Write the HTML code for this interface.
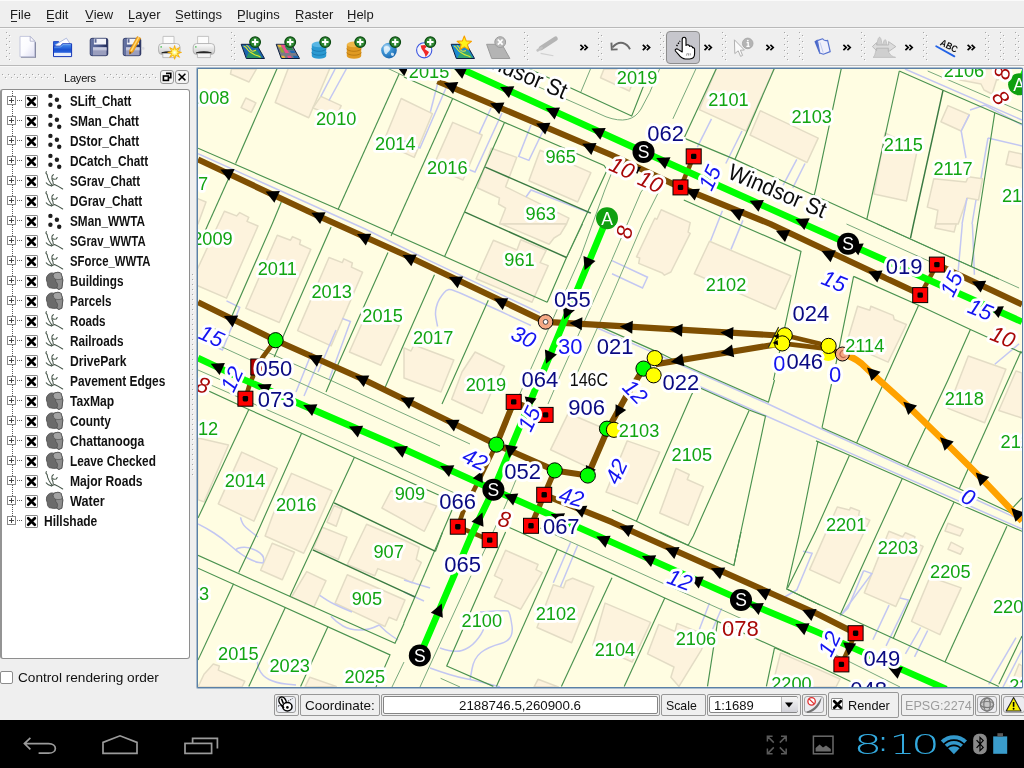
<!DOCTYPE html>
<html><head><meta charset="utf-8"><title>Quantum GIS</title>
<style>
html,body{margin:0;padding:0;}
body{width:1024px;height:768px;overflow:hidden;position:relative;background:#efefef;font-family:"Liberation Sans",sans-serif;font-size:13px;color:#111;}
.abs{position:absolute;}
.hl{position:absolute;left:0;width:1024px;height:1px;}
.menu span{position:absolute;top:7px;font-size:13px;line-height:16px;color:#1a1a1a;white-space:nowrap;transform-origin:0 50%;}
.menu u{text-decoration:none;position:relative;}
.menu u:after{content:"";position:absolute;left:1px;right:1px;bottom:0px;height:1px;background:#2a2a2a;}
.hnd{position:absolute;top:32px;width:6px;height:30px;background-image:linear-gradient(#a6a6a6 1px,transparent 1px),linear-gradient(#fff 1px,transparent 1px),linear-gradient(#a6a6a6 1px,transparent 1px),linear-gradient(#fff 1px,transparent 1px);background-size:1px 6px;background-repeat:repeat-y;background-position:0 0,1px 1px,3px 3px,4px 4px;}
.dpat{position:absolute;top:7px;height:5px;background-image:linear-gradient(90deg,#a6a6a6 1px,transparent 1px),linear-gradient(90deg,#fff 1px,transparent 1px),linear-gradient(90deg,#a6a6a6 1px,transparent 1px),linear-gradient(90deg,#fff 1px,transparent 1px);background-size:6px 1px;background-repeat:repeat-x;background-position:0 0,1px 1px,3px 3px,4px 4px;}
.tree{position:absolute;left:0px;top:89px;width:187px;height:568px;background:#fff;border:1px solid #8e8e8e;border-left:2px solid #949494;border-radius:3px;}
.row{position:absolute;left:0;height:20px;width:187px;}
.row .pm{position:absolute;left:5px;top:5px;width:7px;height:7px;border:1px solid #8a8a8a;background:#fff;}
.row .pm:before{content:"";position:absolute;left:1px;top:3px;width:5px;height:1px;background:#444;}
.row .pm:after{content:"";position:absolute;left:3px;top:1px;width:1px;height:5px;background:#444;}
.row .dots{position:absolute;left:15px;top:9px;width:6px;height:1px;background-image:linear-gradient(90deg,#555 50%,transparent 50%);background-size:2px 1px;}
.row .cb{position:absolute;left:23px;top:4px;width:11px;height:11px;border:1px solid #8c8c8c;background:#fff;border-radius:1px;}
.row .cb svg{left:0;top:0;}
.row .lbl{position:absolute;top:2px;font-weight:bold;font-size:14px;line-height:16px;white-space:nowrap;transform-origin:0 50%;color:#111;}
.row svg{position:absolute;}
</style></head>
<body>
<div id="root" style="position:absolute;left:0;top:0;width:1024px;height:768px;overflow:hidden;will-change:transform">
<div class="hl" style="top:0;background:#fafafa"></div>
<div class="menu">
<span style="left:10px"><u>F</u>ile</span>
<span style="left:46px"><u>E</u>dit</span>
<span style="left:85px"><u>V</u>iew</span>
<span style="left:128px"><u>L</u>ayer</span>
<span style="left:175px"><u>S</u>ettings</span>
<span style="left:237px"><u>P</u>lugins</span>
<span style="left:295px"><u>R</u>aster</span>
<span style="left:347px"><u>H</u>elp</span>
</div>
<div class="hl" style="top:27px;background:#b9b9b9"></div>
<div class="hl" style="top:28px;background:#f8f8f8"></div>

<!-- toolbar -->
<div class="hnd" style="left:6px"></div>
<div class="hnd" style="left:231px"></div>
<div class="hnd" style="left:524px"></div>
<div class="hnd" style="left:598px"></div>
<div class="hnd" style="left:660px"></div>
<div class="hnd" style="left:722px"></div>
<div class="hnd" style="left:784px"></div>
<div class="hnd" style="left:799px"></div>
<div class="hnd" style="left:861px"></div>
<div class="hnd" style="left:923px"></div>
<div class="hnd" style="left:985px"></div>
<div class="hnd" style="left:1000px"></div>
<div class="hnd" style="left:1015px"></div>
<div class="abs" style="left:666px;top:31px;width:32px;height:31px;border:1px solid #8d8d8d;border-radius:4px;background:#c6c6cc"></div>
<svg class="abs" style="left:0;top:28px" width="1024" height="38" viewBox="0 28 1024 38">
<defs>
<linearGradient id="gpage" x1="0" y1="0" x2="1" y2="1"><stop offset="0" stop-color="#ffffff"/><stop offset="0.5" stop-color="#fbfbff"/><stop offset="1" stop-color="#dedef2"/></linearGradient>
<linearGradient id="gfold" x1="0" y1="0" x2="0" y2="1"><stop offset="0" stop-color="#4a94f0"/><stop offset="0.45" stop-color="#1a52d2"/><stop offset="0.68" stop-color="#2a62dc"/><stop offset="0.72" stop-color="#e8eefc"/><stop offset="1" stop-color="#f4f7ff"/></linearGradient>
<linearGradient id="gflop" x1="0" y1="0" x2="1" y2="0"><stop offset="0" stop-color="#6a78a6"/><stop offset="0.5" stop-color="#48558a"/><stop offset="1" stop-color="#1c2656"/></linearGradient>
<radialGradient id="gglobe" cx="0.35" cy="0.3" r="0.8"><stop offset="0" stop-color="#d8ecfa"/><stop offset="0.4" stop-color="#3f97d8"/><stop offset="1" stop-color="#1660a8"/></radialGradient>
<linearGradient id="gprn" x1="0" y1="0" x2="0" y2="1"><stop offset="0" stop-color="#ffffff"/><stop offset="1" stop-color="#c8c8c8"/></linearGradient>
<radialGradient id="gstar" cx="0.5" cy="0.5" r="0.5"><stop offset="0" stop-color="#ffffff"/><stop offset="0.45" stop-color="#fff04a"/><stop offset="1" stop-color="#ffc400"/></radialGradient>
</defs>
<path d="M21 37.4 H30.6 L36 42.4 V57.8 H21 Z" fill="#777b94"/>
<path d="M20 36.4 H30.2 L34.8 41.2 V56.8 H20 Z" fill="url(#gpage)" stroke="#b9bcd8" stroke-width="0.8"/><path d="M30.2 36.4 V41.2 H34.8 Z" fill="#fbfbff" stroke="#a9acc8" stroke-width="0.8"/>
<path d="M53.5 41.6 H58.6 L59.8 43.2 H64 V47 H53.5 Z" fill="#2a66dc" stroke="#1436b8" stroke-width="0.8"/>
<path d="M55.2 44.8 L66.4 38.2 L69.9 43.4 L58.6 49.6 Z" fill="#fcfcff" stroke="#93a4d6" stroke-width="0.7"/>
<path d="M53.5 46.2 H60.2 L62.6 43.8 H71.6 V56.6 H53.5 Z" fill="url(#gfold)" stroke="#1436b8" stroke-width="1"/>
<path d="M54.2 52.8 H70.9 V55.9 H54.2 Z" fill="#e8eefc"/>
<path d="M54.4 47 H60.6 L63 44.6 H70.8" fill="none" stroke="#8cb8f4" stroke-width="0.7"/>
<rect x="90.2" y="38.3" width="17.6" height="17.4" rx="1.8" fill="url(#gflop)" stroke="#222c5c" stroke-width="0.8"/><rect x="93.9" y="38.7" width="12.2" height="5.8" fill="#f2f3fa"/><rect x="94.60000000000001" y="39.1" width="1.9" height="3.6" fill="#5a6694"/><rect x="93.0" y="47.3" width="13.6" height="8" fill="#9a9ebe"/><rect x="93.0" y="47.3" width="13.6" height="2.6" fill="#c8cbe0"/><rect x="93.0" y="49.9" width="13.6" height="0.7" fill="#b2b5d0"/>
<rect x="123.2" y="38.3" width="17.6" height="17.4" rx="1.8" fill="url(#gflop)" stroke="#222c5c" stroke-width="0.8"/><rect x="126.9" y="38.7" width="12.2" height="5.8" fill="#f2f3fa"/><rect x="127.60000000000001" y="39.1" width="1.9" height="3.6" fill="#5a6694"/><rect x="126.0" y="47.3" width="13.6" height="8" fill="#9a9ebe"/><rect x="126.0" y="47.3" width="13.6" height="2.6" fill="#c8cbe0"/><rect x="126.0" y="49.9" width="13.6" height="0.7" fill="#b2b5d0"/>
<path d="M137.2 36.6 L140.8 38.2 L133 52 L129.6 54.2 L129.4 50.4 Z" fill="#f6a81c" stroke="#d88a10" stroke-width="0.6"/><path d="M138.2 37 L139.4 37.6 L131.8 51.2 L130.4 50.8 Z" fill="#ffd978"/><path d="M129.6 54.2 L129.5 51.6 L131.6 52.8 Z" fill="#704010"/>
<circle cx="143.2" cy="48.4" r="1.4" fill="#dcdce2"/>
<path d="M163.0 36.4 H174.0 V44 H163.0 Z" fill="#fcfcfc" stroke="#b8b8b8" stroke-width="0.8"/><rect x="158.6" y="43.6" width="21.4" height="10.8" rx="3.4" fill="url(#gprn)" stroke="#a4a4a4" stroke-width="0.8"/><path d="M161.6 52.2 Q169.2 50.2 176.79999999999998 52.2 V53.6 H161.6 Z" fill="#1a1a1a"/><path d="M162.79999999999998 53.4 H175.79999999999998 V57.6 H162.79999999999998 Z" fill="#f4f4f4" stroke="#b0b0b0" stroke-width="0.8"/><rect x="160.39999999999998" y="46.2" width="1.6" height="1.4" fill="#58c060"/>
<polygon points="174.6,45.5 175.7,49.6 179.5,47.5 177.4,51.3 181.5,52.4 177.4,53.5 179.5,57.3 175.7,55.2 174.6,59.3 173.5,55.2 169.7,57.3 171.8,53.5 167.7,52.4 171.8,51.3 169.7,47.5 173.5,49.6" fill="url(#gstar)" stroke="#f8a800" stroke-width="0.8" stroke-linejoin="round"/>
<path d="M197.60000000000002 36.4 H208.60000000000002 V44 H197.60000000000002 Z" fill="#fcfcfc" stroke="#b8b8b8" stroke-width="0.8"/><rect x="193.20000000000002" y="43.6" width="21.4" height="10.8" rx="3.4" fill="url(#gprn)" stroke="#a4a4a4" stroke-width="0.8"/><path d="M196.20000000000002 52.2 Q203.8 50.2 211.4 52.2 V53.6 H196.20000000000002 Z" fill="#1a1a1a"/><path d="M197.4 53.4 H210.4 V57.6 H197.4 Z" fill="#f4f4f4" stroke="#b0b0b0" stroke-width="0.8"/><rect x="195.0" y="46.2" width="1.6" height="1.4" fill="#58c060"/>
<path d="M241.2 44.3 L256.5 44.3 L264.5 58.5 L246.29999999999998 58.5 Z" fill="#1c66ae" stroke="#0b1e40" stroke-width="1" stroke-linejoin="round"/>
<path d="M248.5 52.5 L257 50.5 L262 57.9 L246.4 57.9 Z" fill="#2e9a58" opacity="0.85"/>
<path d="M243.6 46 C246 46.6 247 48.4 248 50 C249.4 52 251 52.4 253 53.8 C255 55.2 257.4 55.6 260.6 57.2 M246.4 45.2 C248.4 46 249.6 48 251 50.4 C252 51.6 253.6 51.6 256 50" fill="none" stroke="#e2ea28" stroke-width="1.1"/>
<circle cx="255.1" cy="42.1" r="5.3" fill="#2f8a33" stroke="#0c4a12" stroke-width="1.3"/><path d="M251.79999999999998 42.1 H258.4 M255.1 38.800000000000004 V45.4" stroke="#fff" stroke-width="2" fill="none"/>
<path d="M276.2 44.3 L291.5 44.3 L299.5 58.5 L281.3 58.5 Z" fill="#7a7a86" stroke="#0b1e40" stroke-width="1" stroke-linejoin="round"/>
<path d="M277.4 44.8 L280.6 44.8 L282 47.4 L278.8 47.4 Z" fill="#e8b838"/><path d="M280.8 44.8 L284.2 44.8 L289 53 L285.4 53 Z" fill="#ee4f8a"/><path d="M279 47.6 L282 47.6 L284.4 52.4 L281.4 52.4 Z" fill="#8aa838"/><path d="M289.4 50.4 L294 50.4 L295.6 53 L291 53 Z" fill="#1f68b4"/><path d="M284.6 46 L290.6 46 L293.4 50 L287 50 Z" fill="#2f8a58"/><path d="M281 55.8 L284.2 55.8 L285.4 58 L282.2 58 Z" fill="#e8b838"/><path d="M287 55.8 L290.6 55.8 L291.8 58 L288.2 58 Z" fill="#ee4f8a"/><path d="M292.8 55.8 L297.4 55.8 L298.8 58 L294 58 Z" fill="#1f68b4"/>
<circle cx="290.2" cy="42.1" r="5.3" fill="#2f8a33" stroke="#0c4a12" stroke-width="1.3"/><path d="M286.9 42.1 H293.5 M290.2 38.800000000000004 V45.4" stroke="#fff" stroke-width="2" fill="none"/>
<path d="M311.8 44.4 V56 A7.2 2.8 0 0 0 326.2 56 V44.4 Z" fill="#2b9ad2"/><ellipse cx="319.0" cy="44.4" rx="7.2" ry="2.8" fill="#58b6e4"/><path d="M311.8 48.5 A7.2 2.8 0 0 0 326.2 48.5 M311.8 52.4 A7.2 2.8 0 0 0 326.2 52.4" fill="none" stroke="#1a78b0" stroke-width="0.9"/>
<circle cx="325.2" cy="42.1" r="5.3" fill="#2f8a33" stroke="#0c4a12" stroke-width="1.3"/><path d="M321.9 42.1 H328.5 M325.2 38.800000000000004 V45.4" stroke="#fff" stroke-width="2" fill="none"/>
<path d="M346.8 44.4 V56 A7.2 2.8 0 0 0 361.2 56 V44.4 Z" fill="#e09a22"/><ellipse cx="354.0" cy="44.4" rx="7.2" ry="2.8" fill="#efb84a"/><path d="M346.8 48.5 A7.2 2.8 0 0 0 361.2 48.5 M346.8 52.4 A7.2 2.8 0 0 0 361.2 52.4" fill="none" stroke="#b87810" stroke-width="0.9"/>
<circle cx="360.2" cy="42.1" r="5.3" fill="#2f8a33" stroke="#0c4a12" stroke-width="1.3"/><path d="M356.9 42.1 H363.5 M360.2 38.800000000000004 V45.4" stroke="#fff" stroke-width="2" fill="none"/>
<circle cx="389" cy="50.6" r="7.8" fill="url(#gglobe)"/><path d="M384 47 C386 45 389 46 390 48 C391 50 388 52 386.6 54 C385 55 383.4 52 384 47 Z M391 53 C393 52 395 53.4 393.6 55.6 C392 57 390.4 55 391 53 Z" fill="#e4f2fc" opacity="0.85"/>
<circle cx="395.2" cy="42.1" r="5.3" fill="#2f8a33" stroke="#0c4a12" stroke-width="1.3"/><path d="M391.9 42.1 H398.5 M395.2 38.800000000000004 V45.4" stroke="#fff" stroke-width="2" fill="none"/>
<circle cx="424.2" cy="50.3" r="7.6" fill="#f4f4fb" stroke="#3a55e0" stroke-width="1.1"/><path d="M420.6 45.6 L424.8 45 L426.6 46.8 L424.6 49 L426.8 50.4 L429 52 L427.6 54.6 L425.6 57 L424.8 54 L423.4 51.6 L421.6 49 Z" fill="#f02828"/>
<circle cx="430.3" cy="42.1" r="5.3" fill="#2f8a33" stroke="#0c4a12" stroke-width="1.3"/><path d="M427.0 42.1 H433.6 M430.3 38.800000000000004 V45.4" stroke="#fff" stroke-width="2" fill="none"/>
<path d="M451.2 44.3 L466.5 44.3 L474.5 58.5 L456.3 58.5 Z" fill="#1c8ad0" stroke="#0b1e40" stroke-width="1" stroke-linejoin="round"/>
<path d="M460 53 L468 51 L473 57.9 L457.4 57.9 Z" fill="#38a860" opacity="0.85"/>
<path d="M454 46 C456 46.6 457 48.4 458 50 C459.4 52 461 52.4 463 53.8 C465 55.2 467.4 55.6 470.6 57.2 M457 45.4 C458.6 46.4 459.6 48 461 50.4 C462 51.6 463.6 51.6 466 50.4" fill="none" stroke="#d8ea30" stroke-width="1.1"/>
<polygon points="464.3,36.0 466.2,40.9 471.5,41.3 467.4,44.6 468.8,49.7 464.3,46.9 459.8,49.7 461.2,44.6 457.1,41.3 462.4,40.9" fill="#fff21a" stroke="#f8a000" stroke-width="1.1" stroke-linejoin="round"/>
<path d="M486.6 44.3 L501.90000000000003 44.3 L509.90000000000003 58.5 L491.70000000000005 58.5 Z" fill="#b4b4b4" stroke="#9a9a9a" stroke-width="1" stroke-linejoin="round"/>
<circle cx="500.2" cy="42.1" r="5.4" fill="#b9b9b9" stroke="#9a9a9a" stroke-width="1"/><path d="M497.8 39.5 L502.59999999999997 44.7 M502.59999999999997 39.5 L497.8 44.7" stroke="#fff" stroke-width="1.7" fill="none"/>
<path d="M555.6 38.6 L541 48.2" stroke="#b4b4b4" stroke-width="4.4" stroke-linecap="round" fill="none"/><path d="M541.6 47.8 L537.6 50.4" stroke="#c2c2c2" stroke-width="2.6" stroke-linecap="round"/><path d="M540.6 53.4 L553.4 55.8" stroke="#d0d0d0" stroke-width="1.1"/>
<path d="M580.4 44.9 L583.1999999999999 47.5 L580.4 50.1 M584.4 44.9 L587.1999999999999 47.5 L584.4 50.1" fill="none" stroke="#000" stroke-width="1.7"/>
<path d="M630 49.2 C627 43.4 620 39 612.4 47.4" fill="none" stroke="#6a6a6a" stroke-width="1.9"/><path d="M611.4 42.6 L611.8 49.6 L617.6 49.4" fill="none" stroke="#6a6a6a" stroke-width="1.9" stroke-linejoin="miter"/>
<path d="M642.8000000000001 44.9 L645.6 47.5 L642.8000000000001 50.1 M646.8000000000001 44.9 L649.6 47.5 L646.8000000000001 50.1" fill="none" stroke="#000" stroke-width="1.7"/>
<path d="M682.2 52 V39.4 C682.2 36.6 686 36.6 686 39.4 V45.4 C687 44.4 689.4 44.6 689.6 46.4 C690.8 45.6 692.6 46.2 692.6 47.8 C693.6 47.4 694.6 48 694.6 49.6 V53.6 C694.6 57 692.6 59 689.6 59 H685.4 C682.4 59 680.4 57 678.4 54.4 L675.4 51 C674.6 49.6 676.4 48.2 678 49.4 Z" fill="#fff" stroke="#000" stroke-width="1.1" stroke-linejoin="round"/>
<path d="M676.6 46 L680 41" stroke="#000" stroke-width="1.4" stroke-dasharray="1.4 1.2" fill="none"/>
<path d="M686.4 55.6 L687.4 53 M688.4 55.6 L688.8 53.2 M690.2 55.4 L690.4 53.4" stroke="#555" stroke-width="0.6"/>
<path d="M704.5 44.9 L707.3 47.5 L704.5 50.1 M708.5 44.9 L711.3 47.5 L708.5 50.1" fill="none" stroke="#000" stroke-width="1.7"/>
<path d="M734.4 39.8 L734.8 53.6 L738.2 50.8 L740.6 56.4 L742.6 55.4 L740.4 50.2 L744.4 50 Z" fill="#fafafa" stroke="#b0b0b0" stroke-width="1"/>
<circle cx="747.7" cy="43.4" r="5.3" fill="#b4b4b4" stroke="#a2a2a2" stroke-width="0.8"/><path d="M746.6 42.6 H748.2 V46.4 M746.4 46.4 H749.6" stroke="#fff" stroke-width="1.3" fill="none"/><circle cx="747.8" cy="40.6" r="0.9" fill="#fff"/>
<path d="M766.4 44.9 L769.1999999999999 47.5 L766.4 50.1 M770.4 44.9 L773.1999999999999 47.5 L770.4 50.1" fill="none" stroke="#000" stroke-width="1.7"/>
<path d="M814.4 41.6 L817.4 39.6 L822 52.8 L819.4 53.8 Z" fill="#4a68c8"/><path d="M817.4 40.6 L822.6 38.8 C824 41 825.6 41 827.6 40.4 L830.2 51.6 L823.4 54.2 L819.8 53 Z" fill="#f0f0fb" stroke="#5874d0" stroke-width="1.2" stroke-linejoin="round"/><path d="M820 42.4 L823.2 52.6" stroke="#b4c0ea" stroke-width="0.8"/>
<path d="M843.4 44.9 L846.1999999999999 47.5 L843.4 50.1 M847.4 44.9 L850.1999999999999 47.5 L847.4 50.1" fill="none" stroke="#000" stroke-width="1.7"/>
<path d="M873 57.4 C875 57 876 50 877.6 41 C878.6 36 880.6 36 881.4 41 C882 45 882.6 46 883.6 42 C884.6 38.6 886 38.8 886.6 43 C887.6 51 889 56 895.6 57.4 Z" fill="#cfcfcf" stroke="#bcbcbc" stroke-width="0.8"/><path d="M872.4 46.6 L876.6 42.6 V45 H888.6 V41.6 L895.8 46.6 L888.6 51.6 V48.2 H876.6 V50.6 Z" fill="#dcdcdc" stroke="#b0b0b0" stroke-width="0.8" stroke-linejoin="round"/>
<path d="M905.4 44.9 L908.1999999999999 47.5 L905.4 50.1 M909.4 44.9 L912.1999999999999 47.5 L909.4 50.1" fill="none" stroke="#000" stroke-width="1.7"/>
<text transform="translate(939.6,44.8) rotate(27)" font-family="Liberation Sans, sans-serif" font-size="9.5" font-weight="bold" fill="#111" textLength="18" lengthAdjust="spacingAndGlyphs">ABC</text>
<path d="M936.2 46.2 L954.4 56.4" stroke="#2262e6" stroke-width="1.8" stroke-linecap="round"/>
<path d="M967.6 44.9 L970.4 47.5 L967.6 50.1 M971.6 44.9 L974.4 47.5 L971.6 50.1" fill="none" stroke="#000" stroke-width="1.7"/>
</svg>
<div class="hl" style="top:65px;background:#b9b9b9"></div><div class="hl" style="top:66px;background:#f8f8f8"></div>
<!-- dock -->
<div class="abs" style="left:0;top:67px;width:192px;height:22px;">
<div class="dpat" style="left:2px;width:53px"></div><div class="dpat" style="left:104px;width:53px"></div>
<span class="abs" style="left:64px;top:4px;font-size:11px;line-height:14px;color:#111;letter-spacing:-0.2px">Layers</span>
<div class="abs" style="left:160px;top:3px;width:12px;height:12px;border:1px solid #979797;border-radius:3px;background:#f4f4f4"><svg class="abs" style="left:0;top:0" width="12" height="12" viewBox="0 0 12 12"><path d="M5 2.4 H9.8 V6.6 H7.6" fill="none" stroke="#000" stroke-width="1.6"/><rect x="2.4" y="5" width="5" height="4.4" fill="none" stroke="#000" stroke-width="1.6"/></svg></div>
<div class="abs" style="left:175px;top:3px;width:12px;height:12px;border:1px solid #979797;border-radius:3px;background:#f4f4f4"><svg class="abs" style="left:0;top:0" width="12" height="12" viewBox="0 0 12 12"><path d="M2.6 2.8 L9.4 9.4 M9.4 2.8 L2.6 9.4" fill="none" stroke="#000" stroke-width="1.5"/></svg></div>
</div>
<div class="tree">
<div class="abs" style="left:10px;top:1px;width:1px;height:431px;background-image:linear-gradient(180deg,#555 50%,transparent 50%);background-size:1px 2px;"></div>
<div class="row" style="top:1px">
<div class="pm"></div><div class="dots"></div>
<div class="cb"><svg style="left:0;top:0" width="11" height="11" viewBox="0 0 11 11"><path d="M2.2 2.2 L8.8 8.8 M8.8 2.2 L2.2 8.8" stroke="#000" stroke-width="2.7" stroke-linecap="round"/></svg></div>
<svg style="left:43px;top:1px" width="20" height="18" viewBox="0 0 20 18"><g fill="#1e1e1e"><circle cx="5.4" cy="3.9" r="2.2"/><circle cx="11.9" cy="7.8" r="2.2"/><circle cx="5.4" cy="12.8" r="2.2"/><circle cx="14.2" cy="14.8" r="2.2"/></g></svg>
<span class="lbl" style="left:68px;transform:scaleX(0.821)">SLift_Chatt</span>
</div>
<div class="row" style="top:21px">
<div class="pm"></div><div class="dots"></div>
<div class="cb"><svg style="left:0;top:0" width="11" height="11" viewBox="0 0 11 11"><path d="M2.2 2.2 L8.8 8.8 M8.8 2.2 L2.2 8.8" stroke="#000" stroke-width="2.7" stroke-linecap="round"/></svg></div>
<svg style="left:43px;top:1px" width="20" height="18" viewBox="0 0 20 18"><g fill="#1e1e1e"><circle cx="5.4" cy="3.9" r="2.2"/><circle cx="11.9" cy="7.8" r="2.2"/><circle cx="5.4" cy="12.8" r="2.2"/><circle cx="14.2" cy="14.8" r="2.2"/></g></svg>
<span class="lbl" style="left:68px;transform:scaleX(0.854)">SMan_Chatt</span>
</div>
<div class="row" style="top:41px">
<div class="pm"></div><div class="dots"></div>
<div class="cb"><svg style="left:0;top:0" width="11" height="11" viewBox="0 0 11 11"><path d="M2.2 2.2 L8.8 8.8 M8.8 2.2 L2.2 8.8" stroke="#000" stroke-width="2.7" stroke-linecap="round"/></svg></div>
<svg style="left:43px;top:1px" width="20" height="18" viewBox="0 0 20 18"><g fill="#1e1e1e"><circle cx="5.4" cy="3.9" r="2.2"/><circle cx="11.9" cy="7.8" r="2.2"/><circle cx="5.4" cy="12.8" r="2.2"/><circle cx="14.2" cy="14.8" r="2.2"/></g></svg>
<span class="lbl" style="left:68px;transform:scaleX(0.846)">DStor_Chatt</span>
</div>
<div class="row" style="top:61px">
<div class="pm"></div><div class="dots"></div>
<div class="cb"><svg style="left:0;top:0" width="11" height="11" viewBox="0 0 11 11"><path d="M2.2 2.2 L8.8 8.8 M8.8 2.2 L2.2 8.8" stroke="#000" stroke-width="2.7" stroke-linecap="round"/></svg></div>
<svg style="left:43px;top:1px" width="20" height="18" viewBox="0 0 20 18"><g fill="#1e1e1e"><circle cx="5.4" cy="3.9" r="2.2"/><circle cx="11.9" cy="7.8" r="2.2"/><circle cx="5.4" cy="12.8" r="2.2"/><circle cx="14.2" cy="14.8" r="2.2"/></g></svg>
<span class="lbl" style="left:68px;transform:scaleX(0.845)">DCatch_Chatt</span>
</div>
<div class="row" style="top:81px">
<div class="pm"></div><div class="dots"></div>
<div class="cb"><svg style="left:0;top:0" width="11" height="11" viewBox="0 0 11 11"><path d="M2.2 2.2 L8.8 8.8 M8.8 2.2 L2.2 8.8" stroke="#000" stroke-width="2.7" stroke-linecap="round"/></svg></div>
<svg style="left:42px;top:-1px" width="21" height="22" viewBox="0 0 21 22"><g fill="none" stroke="#46564a" stroke-width="1.05" stroke-linecap="round" stroke-linejoin="round"><path d="M2.3 1.6 L1.9 3.2 L3.1 4.6 L3.6 7.2 L5 10.4 L6.5 13 L8.2 15.4 L10.6 14.6 L13.5 15.9 L18.7 19"/><path d="M9.4 4.6 L8 6.2 L7.9 9 L8.9 11.5 L9.3 14"/><path d="M13.2 7.5 L12.3 8.9 L9.9 9.2 L8.6 8.6"/><path d="M2.2 12.9 L4.4 14.8 L7.6 16.1 L8.2 15.4"/></g></svg>
<span class="lbl" style="left:68px;transform:scaleX(0.826)">SGrav_Chatt</span>
</div>
<div class="row" style="top:101px">
<div class="pm"></div><div class="dots"></div>
<div class="cb"><svg style="left:0;top:0" width="11" height="11" viewBox="0 0 11 11"><path d="M2.2 2.2 L8.8 8.8 M8.8 2.2 L2.2 8.8" stroke="#000" stroke-width="2.7" stroke-linecap="round"/></svg></div>
<svg style="left:42px;top:-1px" width="21" height="22" viewBox="0 0 21 22"><g fill="none" stroke="#46564a" stroke-width="1.05" stroke-linecap="round" stroke-linejoin="round"><path d="M2.3 1.6 L1.9 3.2 L3.1 4.6 L3.6 7.2 L5 10.4 L6.5 13 L8.2 15.4 L10.6 14.6 L13.5 15.9 L18.7 19"/><path d="M9.4 4.6 L8 6.2 L7.9 9 L8.9 11.5 L9.3 14"/><path d="M13.2 7.5 L12.3 8.9 L9.9 9.2 L8.6 8.6"/><path d="M2.2 12.9 L4.4 14.8 L7.6 16.1 L8.2 15.4"/></g></svg>
<span class="lbl" style="left:68px;transform:scaleX(0.842)">DGrav_Chatt</span>
</div>
<div class="row" style="top:121px">
<div class="pm"></div><div class="dots"></div>
<div class="cb"><svg style="left:0;top:0" width="11" height="11" viewBox="0 0 11 11"><path d="M2.2 2.2 L8.8 8.8 M8.8 2.2 L2.2 8.8" stroke="#000" stroke-width="2.7" stroke-linecap="round"/></svg></div>
<svg style="left:43px;top:1px" width="20" height="18" viewBox="0 0 20 18"><g fill="#1e1e1e"><circle cx="5.4" cy="3.9" r="2.2"/><circle cx="11.9" cy="7.8" r="2.2"/><circle cx="5.4" cy="12.8" r="2.2"/><circle cx="14.2" cy="14.8" r="2.2"/></g></svg>
<span class="lbl" style="left:68px;transform:scaleX(0.841)">SMan_WWTA</span>
</div>
<div class="row" style="top:141px">
<div class="pm"></div><div class="dots"></div>
<div class="cb"><svg style="left:0;top:0" width="11" height="11" viewBox="0 0 11 11"><path d="M2.2 2.2 L8.8 8.8 M8.8 2.2 L2.2 8.8" stroke="#000" stroke-width="2.7" stroke-linecap="round"/></svg></div>
<svg style="left:42px;top:-1px" width="21" height="22" viewBox="0 0 21 22"><g fill="none" stroke="#46564a" stroke-width="1.05" stroke-linecap="round" stroke-linejoin="round"><path d="M2.3 1.6 L1.9 3.2 L3.1 4.6 L3.6 7.2 L5 10.4 L6.5 13 L8.2 15.4 L10.6 14.6 L13.5 15.9 L18.7 19"/><path d="M9.4 4.6 L8 6.2 L7.9 9 L8.9 11.5 L9.3 14"/><path d="M13.2 7.5 L12.3 8.9 L9.9 9.2 L8.6 8.6"/><path d="M2.2 12.9 L4.4 14.8 L7.6 16.1 L8.2 15.4"/></g></svg>
<span class="lbl" style="left:68px;transform:scaleX(0.812)">SGrav_WWTA</span>
</div>
<div class="row" style="top:161px">
<div class="pm"></div><div class="dots"></div>
<div class="cb"><svg style="left:0;top:0" width="11" height="11" viewBox="0 0 11 11"><path d="M2.2 2.2 L8.8 8.8 M8.8 2.2 L2.2 8.8" stroke="#000" stroke-width="2.7" stroke-linecap="round"/></svg></div>
<svg style="left:42px;top:-1px" width="21" height="22" viewBox="0 0 21 22"><g fill="none" stroke="#46564a" stroke-width="1.05" stroke-linecap="round" stroke-linejoin="round"><path d="M2.3 1.6 L1.9 3.2 L3.1 4.6 L3.6 7.2 L5 10.4 L6.5 13 L8.2 15.4 L10.6 14.6 L13.5 15.9 L18.7 19"/><path d="M9.4 4.6 L8 6.2 L7.9 9 L8.9 11.5 L9.3 14"/><path d="M13.2 7.5 L12.3 8.9 L9.9 9.2 L8.6 8.6"/><path d="M2.2 12.9 L4.4 14.8 L7.6 16.1 L8.2 15.4"/></g></svg>
<span class="lbl" style="left:68px;transform:scaleX(0.811)">SForce_WWTA</span>
</div>
<div class="row" style="top:181px">
<div class="pm"></div><div class="dots"></div>
<div class="cb"><svg style="left:0;top:0" width="11" height="11" viewBox="0 0 11 11"><path d="M2.2 2.2 L8.8 8.8 M8.8 2.2 L2.2 8.8" stroke="#000" stroke-width="2.7" stroke-linecap="round"/></svg></div>
<svg style="left:43px;top:0px" width="20" height="20" viewBox="0 0 20 20"><path d="M3.2 3.6 C5 1.6 7.5 1.6 9 2.4 L10.5 1.8 C13 1 15.5 1.4 16 2.6 L17.2 6.5 L17.8 9 L17.4 13 L16.8 17.2 L13.8 18.4 L11.8 17.2 L8.5 17.4 L4 16.6 L2.6 14.6 L2.2 11.5 L1.4 9 L1.6 6 Z" fill="#6b6b6b" stroke="#4c4c4c" stroke-width="0.8"/><path d="M10.5 1.8 C13 1 15.5 1.4 16 2.6 L17.2 6.5 L17.8 9 L17.4 13 L16.8 17.2 L13.8 18.4 L11.8 17.2 L12.6 14.6 L12.2 12.4 L10.8 10.4 L10.6 8.2 L8.6 6.4 L8.2 4.2 L9 2.4 Z" fill="#8d8d8d" stroke="#4c4c4c" stroke-width="0.7"/><path d="M10.5 1.8 C13 1 15.5 1.4 16 2.6 L17.2 6.5 L16.6 8.2 L13 8.6 L10.6 8.2 L8.6 6.4 L8.2 4.2 L9 2.4 Z" fill="#a3a3a3" stroke="#4c4c4c" stroke-width="0.6"/></svg>
<span class="lbl" style="left:68px;transform:scaleX(0.839)">Buildings</span>
</div>
<div class="row" style="top:201px">
<div class="pm"></div><div class="dots"></div>
<div class="cb"><svg style="left:0;top:0" width="11" height="11" viewBox="0 0 11 11"><path d="M2.2 2.2 L8.8 8.8 M8.8 2.2 L2.2 8.8" stroke="#000" stroke-width="2.7" stroke-linecap="round"/></svg></div>
<svg style="left:43px;top:0px" width="20" height="20" viewBox="0 0 20 20"><path d="M3.2 3.6 C5 1.6 7.5 1.6 9 2.4 L10.5 1.8 C13 1 15.5 1.4 16 2.6 L17.2 6.5 L17.8 9 L17.4 13 L16.8 17.2 L13.8 18.4 L11.8 17.2 L8.5 17.4 L4 16.6 L2.6 14.6 L2.2 11.5 L1.4 9 L1.6 6 Z" fill="#6b6b6b" stroke="#4c4c4c" stroke-width="0.8"/><path d="M10.5 1.8 C13 1 15.5 1.4 16 2.6 L17.2 6.5 L17.8 9 L17.4 13 L16.8 17.2 L13.8 18.4 L11.8 17.2 L12.6 14.6 L12.2 12.4 L10.8 10.4 L10.6 8.2 L8.6 6.4 L8.2 4.2 L9 2.4 Z" fill="#8d8d8d" stroke="#4c4c4c" stroke-width="0.7"/><path d="M10.5 1.8 C13 1 15.5 1.4 16 2.6 L17.2 6.5 L16.6 8.2 L13 8.6 L10.6 8.2 L8.6 6.4 L8.2 4.2 L9 2.4 Z" fill="#a3a3a3" stroke="#4c4c4c" stroke-width="0.6"/></svg>
<span class="lbl" style="left:68px;transform:scaleX(0.832)">Parcels</span>
</div>
<div class="row" style="top:221px">
<div class="pm"></div><div class="dots"></div>
<div class="cb"><svg style="left:0;top:0" width="11" height="11" viewBox="0 0 11 11"><path d="M2.2 2.2 L8.8 8.8 M8.8 2.2 L2.2 8.8" stroke="#000" stroke-width="2.7" stroke-linecap="round"/></svg></div>
<svg style="left:42px;top:-1px" width="21" height="22" viewBox="0 0 21 22"><g fill="none" stroke="#46564a" stroke-width="1.05" stroke-linecap="round" stroke-linejoin="round"><path d="M2.3 1.6 L1.9 3.2 L3.1 4.6 L3.6 7.2 L5 10.4 L6.5 13 L8.2 15.4 L10.6 14.6 L13.5 15.9 L18.7 19"/><path d="M9.4 4.6 L8 6.2 L7.9 9 L8.9 11.5 L9.3 14"/><path d="M13.2 7.5 L12.3 8.9 L9.9 9.2 L8.6 8.6"/><path d="M2.2 12.9 L4.4 14.8 L7.6 16.1 L8.2 15.4"/></g></svg>
<span class="lbl" style="left:68px;transform:scaleX(0.830)">Roads</span>
</div>
<div class="row" style="top:241px">
<div class="pm"></div><div class="dots"></div>
<div class="cb"><svg style="left:0;top:0" width="11" height="11" viewBox="0 0 11 11"><path d="M2.2 2.2 L8.8 8.8 M8.8 2.2 L2.2 8.8" stroke="#000" stroke-width="2.7" stroke-linecap="round"/></svg></div>
<svg style="left:42px;top:-1px" width="21" height="22" viewBox="0 0 21 22"><g fill="none" stroke="#46564a" stroke-width="1.05" stroke-linecap="round" stroke-linejoin="round"><path d="M2.3 1.6 L1.9 3.2 L3.1 4.6 L3.6 7.2 L5 10.4 L6.5 13 L8.2 15.4 L10.6 14.6 L13.5 15.9 L18.7 19"/><path d="M9.4 4.6 L8 6.2 L7.9 9 L8.9 11.5 L9.3 14"/><path d="M13.2 7.5 L12.3 8.9 L9.9 9.2 L8.6 8.6"/><path d="M2.2 12.9 L4.4 14.8 L7.6 16.1 L8.2 15.4"/></g></svg>
<span class="lbl" style="left:68px;transform:scaleX(0.839)">Railroads</span>
</div>
<div class="row" style="top:261px">
<div class="pm"></div><div class="dots"></div>
<div class="cb"><svg style="left:0;top:0" width="11" height="11" viewBox="0 0 11 11"><path d="M2.2 2.2 L8.8 8.8 M8.8 2.2 L2.2 8.8" stroke="#000" stroke-width="2.7" stroke-linecap="round"/></svg></div>
<svg style="left:42px;top:-1px" width="21" height="22" viewBox="0 0 21 22"><g fill="none" stroke="#46564a" stroke-width="1.05" stroke-linecap="round" stroke-linejoin="round"><path d="M2.3 1.6 L1.9 3.2 L3.1 4.6 L3.6 7.2 L5 10.4 L6.5 13 L8.2 15.4 L10.6 14.6 L13.5 15.9 L18.7 19"/><path d="M9.4 4.6 L8 6.2 L7.9 9 L8.9 11.5 L9.3 14"/><path d="M13.2 7.5 L12.3 8.9 L9.9 9.2 L8.6 8.6"/><path d="M2.2 12.9 L4.4 14.8 L7.6 16.1 L8.2 15.4"/></g></svg>
<span class="lbl" style="left:68px;transform:scaleX(0.864)">DrivePark</span>
</div>
<div class="row" style="top:281px">
<div class="pm"></div><div class="dots"></div>
<div class="cb"><svg style="left:0;top:0" width="11" height="11" viewBox="0 0 11 11"><path d="M2.2 2.2 L8.8 8.8 M8.8 2.2 L2.2 8.8" stroke="#000" stroke-width="2.7" stroke-linecap="round"/></svg></div>
<svg style="left:42px;top:-1px" width="21" height="22" viewBox="0 0 21 22"><g fill="none" stroke="#46564a" stroke-width="1.05" stroke-linecap="round" stroke-linejoin="round"><path d="M2.3 1.6 L1.9 3.2 L3.1 4.6 L3.6 7.2 L5 10.4 L6.5 13 L8.2 15.4 L10.6 14.6 L13.5 15.9 L18.7 19"/><path d="M9.4 4.6 L8 6.2 L7.9 9 L8.9 11.5 L9.3 14"/><path d="M13.2 7.5 L12.3 8.9 L9.9 9.2 L8.6 8.6"/><path d="M2.2 12.9 L4.4 14.8 L7.6 16.1 L8.2 15.4"/></g></svg>
<span class="lbl" style="left:68px;transform:scaleX(0.851)">Pavement Edges</span>
</div>
<div class="row" style="top:301px">
<div class="pm"></div><div class="dots"></div>
<div class="cb"><svg style="left:0;top:0" width="11" height="11" viewBox="0 0 11 11"><path d="M2.2 2.2 L8.8 8.8 M8.8 2.2 L2.2 8.8" stroke="#000" stroke-width="2.7" stroke-linecap="round"/></svg></div>
<svg style="left:43px;top:0px" width="20" height="20" viewBox="0 0 20 20"><path d="M3.2 3.6 C5 1.6 7.5 1.6 9 2.4 L10.5 1.8 C13 1 15.5 1.4 16 2.6 L17.2 6.5 L17.8 9 L17.4 13 L16.8 17.2 L13.8 18.4 L11.8 17.2 L8.5 17.4 L4 16.6 L2.6 14.6 L2.2 11.5 L1.4 9 L1.6 6 Z" fill="#6b6b6b" stroke="#4c4c4c" stroke-width="0.8"/><path d="M10.5 1.8 C13 1 15.5 1.4 16 2.6 L17.2 6.5 L17.8 9 L17.4 13 L16.8 17.2 L13.8 18.4 L11.8 17.2 L12.6 14.6 L12.2 12.4 L10.8 10.4 L10.6 8.2 L8.6 6.4 L8.2 4.2 L9 2.4 Z" fill="#8d8d8d" stroke="#4c4c4c" stroke-width="0.7"/><path d="M10.5 1.8 C13 1 15.5 1.4 16 2.6 L17.2 6.5 L16.6 8.2 L13 8.6 L10.6 8.2 L8.6 6.4 L8.2 4.2 L9 2.4 Z" fill="#a3a3a3" stroke="#4c4c4c" stroke-width="0.6"/></svg>
<span class="lbl" style="left:68px;transform:scaleX(0.864)">TaxMap</span>
</div>
<div class="row" style="top:321px">
<div class="pm"></div><div class="dots"></div>
<div class="cb"><svg style="left:0;top:0" width="11" height="11" viewBox="0 0 11 11"><path d="M2.2 2.2 L8.8 8.8 M8.8 2.2 L2.2 8.8" stroke="#000" stroke-width="2.7" stroke-linecap="round"/></svg></div>
<svg style="left:43px;top:0px" width="20" height="20" viewBox="0 0 20 20"><path d="M3.2 3.6 C5 1.6 7.5 1.6 9 2.4 L10.5 1.8 C13 1 15.5 1.4 16 2.6 L17.2 6.5 L17.8 9 L17.4 13 L16.8 17.2 L13.8 18.4 L11.8 17.2 L8.5 17.4 L4 16.6 L2.6 14.6 L2.2 11.5 L1.4 9 L1.6 6 Z" fill="#6b6b6b" stroke="#4c4c4c" stroke-width="0.8"/><path d="M10.5 1.8 C13 1 15.5 1.4 16 2.6 L17.2 6.5 L17.8 9 L17.4 13 L16.8 17.2 L13.8 18.4 L11.8 17.2 L12.6 14.6 L12.2 12.4 L10.8 10.4 L10.6 8.2 L8.6 6.4 L8.2 4.2 L9 2.4 Z" fill="#8d8d8d" stroke="#4c4c4c" stroke-width="0.7"/><path d="M10.5 1.8 C13 1 15.5 1.4 16 2.6 L17.2 6.5 L16.6 8.2 L13 8.6 L10.6 8.2 L8.6 6.4 L8.2 4.2 L9 2.4 Z" fill="#a3a3a3" stroke="#4c4c4c" stroke-width="0.6"/></svg>
<span class="lbl" style="left:68px;transform:scaleX(0.848)">County</span>
</div>
<div class="row" style="top:341px">
<div class="pm"></div><div class="dots"></div>
<div class="cb"><svg style="left:0;top:0" width="11" height="11" viewBox="0 0 11 11"><path d="M2.2 2.2 L8.8 8.8 M8.8 2.2 L2.2 8.8" stroke="#000" stroke-width="2.7" stroke-linecap="round"/></svg></div>
<svg style="left:43px;top:0px" width="20" height="20" viewBox="0 0 20 20"><path d="M3.2 3.6 C5 1.6 7.5 1.6 9 2.4 L10.5 1.8 C13 1 15.5 1.4 16 2.6 L17.2 6.5 L17.8 9 L17.4 13 L16.8 17.2 L13.8 18.4 L11.8 17.2 L8.5 17.4 L4 16.6 L2.6 14.6 L2.2 11.5 L1.4 9 L1.6 6 Z" fill="#6b6b6b" stroke="#4c4c4c" stroke-width="0.8"/><path d="M10.5 1.8 C13 1 15.5 1.4 16 2.6 L17.2 6.5 L17.8 9 L17.4 13 L16.8 17.2 L13.8 18.4 L11.8 17.2 L12.6 14.6 L12.2 12.4 L10.8 10.4 L10.6 8.2 L8.6 6.4 L8.2 4.2 L9 2.4 Z" fill="#8d8d8d" stroke="#4c4c4c" stroke-width="0.7"/><path d="M10.5 1.8 C13 1 15.5 1.4 16 2.6 L17.2 6.5 L16.6 8.2 L13 8.6 L10.6 8.2 L8.6 6.4 L8.2 4.2 L9 2.4 Z" fill="#a3a3a3" stroke="#4c4c4c" stroke-width="0.6"/></svg>
<span class="lbl" style="left:68px;transform:scaleX(0.868)">Chattanooga</span>
</div>
<div class="row" style="top:361px">
<div class="pm"></div><div class="dots"></div>
<div class="cb"><svg style="left:0;top:0" width="11" height="11" viewBox="0 0 11 11"><path d="M2.2 2.2 L8.8 8.8 M8.8 2.2 L2.2 8.8" stroke="#000" stroke-width="2.7" stroke-linecap="round"/></svg></div>
<svg style="left:43px;top:0px" width="20" height="20" viewBox="0 0 20 20"><path d="M3.2 3.6 C5 1.6 7.5 1.6 9 2.4 L10.5 1.8 C13 1 15.5 1.4 16 2.6 L17.2 6.5 L17.8 9 L17.4 13 L16.8 17.2 L13.8 18.4 L11.8 17.2 L8.5 17.4 L4 16.6 L2.6 14.6 L2.2 11.5 L1.4 9 L1.6 6 Z" fill="#6b6b6b" stroke="#4c4c4c" stroke-width="0.8"/><path d="M10.5 1.8 C13 1 15.5 1.4 16 2.6 L17.2 6.5 L17.8 9 L17.4 13 L16.8 17.2 L13.8 18.4 L11.8 17.2 L12.6 14.6 L12.2 12.4 L10.8 10.4 L10.6 8.2 L8.6 6.4 L8.2 4.2 L9 2.4 Z" fill="#8d8d8d" stroke="#4c4c4c" stroke-width="0.7"/><path d="M10.5 1.8 C13 1 15.5 1.4 16 2.6 L17.2 6.5 L16.6 8.2 L13 8.6 L10.6 8.2 L8.6 6.4 L8.2 4.2 L9 2.4 Z" fill="#a3a3a3" stroke="#4c4c4c" stroke-width="0.6"/></svg>
<span class="lbl" style="left:68px;transform:scaleX(0.842)">Leave Checked</span>
</div>
<div class="row" style="top:381px">
<div class="pm"></div><div class="dots"></div>
<div class="cb"><svg style="left:0;top:0" width="11" height="11" viewBox="0 0 11 11"><path d="M2.2 2.2 L8.8 8.8 M8.8 2.2 L2.2 8.8" stroke="#000" stroke-width="2.7" stroke-linecap="round"/></svg></div>
<svg style="left:42px;top:-1px" width="21" height="22" viewBox="0 0 21 22"><g fill="none" stroke="#46564a" stroke-width="1.05" stroke-linecap="round" stroke-linejoin="round"><path d="M2.3 1.6 L1.9 3.2 L3.1 4.6 L3.6 7.2 L5 10.4 L6.5 13 L8.2 15.4 L10.6 14.6 L13.5 15.9 L18.7 19"/><path d="M9.4 4.6 L8 6.2 L7.9 9 L8.9 11.5 L9.3 14"/><path d="M13.2 7.5 L12.3 8.9 L9.9 9.2 L8.6 8.6"/><path d="M2.2 12.9 L4.4 14.8 L7.6 16.1 L8.2 15.4"/></g></svg>
<span class="lbl" style="left:68px;transform:scaleX(0.863)">Major Roads</span>
</div>
<div class="row" style="top:401px">
<div class="pm"></div><div class="dots"></div>
<div class="cb"><svg style="left:0;top:0" width="11" height="11" viewBox="0 0 11 11"><path d="M2.2 2.2 L8.8 8.8 M8.8 2.2 L2.2 8.8" stroke="#000" stroke-width="2.7" stroke-linecap="round"/></svg></div>
<svg style="left:43px;top:0px" width="20" height="20" viewBox="0 0 20 20"><path d="M3.2 3.6 C5 1.6 7.5 1.6 9 2.4 L10.5 1.8 C13 1 15.5 1.4 16 2.6 L17.2 6.5 L17.8 9 L17.4 13 L16.8 17.2 L13.8 18.4 L11.8 17.2 L8.5 17.4 L4 16.6 L2.6 14.6 L2.2 11.5 L1.4 9 L1.6 6 Z" fill="#6b6b6b" stroke="#4c4c4c" stroke-width="0.8"/><path d="M10.5 1.8 C13 1 15.5 1.4 16 2.6 L17.2 6.5 L17.8 9 L17.4 13 L16.8 17.2 L13.8 18.4 L11.8 17.2 L12.6 14.6 L12.2 12.4 L10.8 10.4 L10.6 8.2 L8.6 6.4 L8.2 4.2 L9 2.4 Z" fill="#8d8d8d" stroke="#4c4c4c" stroke-width="0.7"/><path d="M10.5 1.8 C13 1 15.5 1.4 16 2.6 L17.2 6.5 L16.6 8.2 L13 8.6 L10.6 8.2 L8.6 6.4 L8.2 4.2 L9 2.4 Z" fill="#a3a3a3" stroke="#4c4c4c" stroke-width="0.6"/></svg>
<span class="lbl" style="left:68px;transform:scaleX(0.905)">Water</span>
</div>
<div class="row" style="top:421px">
<div class="pm"></div><div class="dots"></div>
<div class="cb"><svg style="left:0;top:0" width="11" height="11" viewBox="0 0 11 11"><path d="M2.2 2.2 L8.8 8.8 M8.8 2.2 L2.2 8.8" stroke="#000" stroke-width="2.7" stroke-linecap="round"/></svg></div>
<span class="lbl" style="left:42px;transform:scaleX(0.856)">Hillshade</span>
</div>
</div>
<div class="abs" style="left:0px;top:671px;width:11px;height:11px;border:1px solid #8c8c8c;background:#fff;border-radius:2px"></div>
<span class="abs" style="left:18px;top:670px;font-size:13.3px;line-height:16px;white-space:nowrap;color:#111;transform-origin:0 50%;transform:scaleX(1.025)" id="cro">Control rendering order</span>
<div class="abs" style="left:192px;top:274px;width:2px;height:203px;background-image:linear-gradient(#a6a6a6 1px,transparent 1px),linear-gradient(#fff 1px,transparent 1px);background-size:1px 5px;background-repeat:repeat-y;background-position:0 0,1px 1px"></div>
<!-- map -->
<div class="abs" style="left:196px;top:67px;width:827px;height:622px;background:#a9bccd;border-radius:2px"></div>
<div class="abs" style="left:197px;top:68px;width:826px;height:620px;background:#5b80a6;border-radius:1px"></div>
<div class="abs" style="left:198px;top:69px;width:824px;height:618px;background:#fffde2;overflow:hidden">
<svg class="abs" style="left:0;top:0" width="824" height="618" viewBox="198 69 824 618" font-family="Liberation Sans, sans-serif">
<style>
.b{fill:#fdf3dd;stroke:#e3dcc5;stroke-width:1.5;stroke-linejoin:round}
.p{fill:none;stroke:#4a924f;stroke-width:1.15}
.q{fill:none;stroke:#79a97c;stroke-width:1}
.d{fill:none;stroke:#3a7a42;stroke-width:1.45}
.v{fill:none;stroke:#c3c7f2;stroke-width:1.5}
.br{fill:none;stroke:#7f4f02;stroke-width:6.1;stroke-linejoin:round}
.bs{fill:none;stroke:#7f4f02;stroke-width:4.6;stroke-linejoin:round}
.bm{fill:none;stroke:#7f4f02;stroke-width:5.6;stroke-linejoin:round}
.gr{fill:none;stroke:#00ff00;stroke-width:6.7;stroke-linejoin:round}
.or{fill:none;stroke:#ffa200;stroke-width:6.6;stroke-linejoin:round}
text{paint-order:stroke fill;stroke-linejoin:round}
.lg{fill:#12a512;font-size:18.2px;stroke:#fff;stroke-width:5.6px}
.ln{fill:#0a0a82;font-size:22px;stroke:#fff;stroke-width:5.8px}
.lb{fill:#1414f0;font-size:22px;font-style:italic;stroke:#fff;stroke-width:5.8px}
.lu{fill:#1414f0;font-size:22px;stroke:#fff;stroke-width:5.8px}
.lr{fill:#a80808;font-size:22px;font-style:italic;stroke:#fff;stroke-width:5.8px}
.lk{fill:#0c0c0c;stroke:#fff;stroke-width:5.8px}
</style>
<rect x="198" y="69" width="824" height="618" fill="#fffde2"/>
<polygon class="b" points="231.5,69.0 256.5,69.0 249.0,82.0 230.5,74.0"/>
<polygon class="b" points="245.8,98.0 255.9,102.9 251.2,112.3 241.1,107.6"/>
<polygon class="b" points="288.4,68.0 330.0,68.0 308.7,117.8 275.2,102.5"/>
<polygon class="b" points="320.9,96.4 341.2,105.6 336.2,116.7 312.8,108.0"/>
<polygon class="b" points="196.0,198.0 206.0,202.0 198.0,224.0 196.0,224.0"/>
<polygon class="b" points="401.2,98.5 432.4,113.7 414.2,157.4 383.0,143.0"/>
<polygon class="b" points="452.7,122.4 482.2,135.0 463.0,180.0 433.0,167.0"/>
<polygon class="b" points="540.1,150.3 590.9,172.6 577.7,202.0 528.9,180.7"/>
<polygon class="b" points="491.3,148.2 516.7,157.4 505.6,186.8 568.9,218.1 566.5,224.0 499.5,224.0 505.6,208.2 498.5,204.0 499.5,198.0 477.1,187.8"/>
<polygon class="b" points="604.0,69.0 638.0,69.0 629.4,91.0 600.5,77.7"/>
<polygon class="b" points="990.0,69.0 1003.0,69.0 998.0,80.0 985.0,75.0"/>
<polygon class="b" points="716.6,68.0 774.5,68.0 746.1,131.0 699.3,109.6"/>
<polygon class="b" points="760.3,110.7 818.2,138.1 807.0,162.5 750.1,135.0"/>
<polygon class="b" points="885.0,133.0 917.5,149.0 906.4,201.0 873.9,194.0"/>
<polygon class="b" points="948.0,105.6 969.4,114.7 961.2,131.0 940.9,121.8"/>
<polygon class="b" points="933.8,178.7 966.0,182.0 968.3,176.7 982.6,178.7 978.5,200.0 967.3,198.0 958.2,224.0 935.8,224.0 937.9,210.2 927.3,207.1"/>
<polygon class="b" points="1009.0,151.3 1022.0,154.0 1022.0,168.0 1006.0,164.5"/>
<polygon class="b" points="966.0,69.0 1000.0,69.0 992.0,94.0 984.0,90.0 981.0,84.0 960.0,80.0"/>
<polygon class="b" points="224.4,211.2 236.6,215.9 239.7,212.6 248.8,217.3 247.0,221.4 258.0,226.0 226.5,298.1 196.0,285.0 196.0,272.0"/>
<polygon class="b" points="277.3,235.2 290.5,240.2 292.5,236.6 300.6,240.2 299.6,244.3 310.8,249.4 279.3,322.5 245.8,308.3"/>
<polygon class="b" points="329.0,257.5 342.3,262.6 343.9,258.9 352.4,263.0 351.4,267.1 362.6,272.3 331.1,345.9 297.6,330.6"/>
<polygon class="b" points="368.0,310.0 399.1,325.6 380.8,365.2 349.4,352.0"/>
<polygon class="b" points="493.4,240.2 517.0,250.0 520.8,239.8 546.2,250.4 540.1,262.6 548.2,265.6 532.0,302.2 476.1,278.8"/>
<polygon class="b" points="501.5,224.0 566.5,224.0 560.4,234.2 554.0,238.0 549.2,244.3"/>
<polygon class="b" points="404.0,347.9 411.0,351.0 414.0,345.0 453.8,360.0 441.0,392.0 404.0,378.0"/>
<polygon class="b" points="475.1,352.0 504.5,366.2 491.3,392.2 482.2,413.5 451.7,399.3 462.0,372.0"/>
<polygon class="b" points="661.2,209.7 690.2,222.6 688.1,232.2 690.2,233.3 670.9,272.0 664.4,275.2 662.3,273.0 638.7,263.4 639.7,258.0 636.5,256.9 654.8,218.3 656.9,219.3"/>
<polygon class="b" points="709.5,241.3 790.8,275.8 775.5,309.3 694.3,273.8"/>
<polygon class="b" points="857.6,306.3 869.8,310.3 870.8,306.3 893.2,315.4 894.2,319.5 906.4,324.5 888.1,362.1 846.5,343.8"/>
<polygon class="b" points="968.3,356.0 1005.9,369.2 984.6,422.7 948.0,408.4"/>
<polygon class="b" points="1016.0,371.0 1022.0,373.0 1022.0,418.0 998.8,410.5"/>
<polygon class="b" points="935.8,224.0 956.2,224.0 954.1,232.1 934.8,228.0"/>
<polygon class="b" points="198.0,437.9 228.5,445.0 204.1,501.9 198.0,499.8"/>
<polygon class="b" points="241.7,452.1 277.3,468.4 253.9,521.2 218.3,503.9"/>
<polygon class="b" points="291.5,473.4 332.1,490.7 313.8,532.0 303.7,553.3 265.1,536.0 273.2,514.0"/>
<polygon class="b" points="334.1,505.5 342.3,509.0 336.2,526.3 327.0,522.2"/>
<polygon class="b" points="391.0,490.7 436.5,505.9 424.3,531.3 381.9,508.0"/>
<polygon class="b" points="366.6,524.2 404.0,540.0 419.2,547.2 416.2,559.4 421.3,562.5 412.0,582.8 404.0,578.7 377.8,568.6 374.8,575.7 347.3,564.5"/>
<polygon class="b" points="568.3,413.2 607.0,429.8 588.2,467.4 550.6,449.7"/>
<polygon class="b" points="627.2,440.9 659.7,452.1 637.4,503.9 606.0,492.0"/>
<polygon class="b" points="676.0,468.4 689.2,474.5 687.2,479.5 703.4,486.6 700.4,493.7 688.2,525.2 659.7,513.0"/>
<polygon class="b" points="272.2,543.2 294.5,552.3 282.3,579.7 260.6,570.2"/>
<polygon class="b" points="322.2,527.2 347.0,537.1 338.3,559.4 313.5,548.3"/>
<polygon class="b" points="306.7,571.6 326.0,580.7 313.8,607.2 291.5,597.0"/>
<polygon class="b" points="347.3,574.7 405.0,600.0 396.5,620.4 389.0,617.3 384.9,626.5 335.1,603.1"/>
<polygon class="b" points="204.0,674.2 213.3,664.0 219.4,666.0 218.3,670.1 244.8,681.3 242.0,687.0 198.0,687.0"/>
<polygon class="b" points="309.8,677.2 336.2,686.4 305.0,687.0"/>
<polygon class="b" points="505.6,550.3 538.1,564.5 536.0,569.6 542.1,572.6 520.8,609.2 494.4,597.0 502.5,579.7 494.4,575.7"/>
<polygon class="b" points="572.6,578.3 593.9,586.8 571.6,642.7 537.0,627.5 553.3,584.8 563.5,587.9 566.0,581.0"/>
<polygon class="b" points="605.1,603.1 650.6,622.4 632.3,662.0 592.9,645.0"/>
<polygon class="b" points="538.0,679.3 558.4,687.0 534.0,687.0"/>
<polygon class="b" points="658.7,624.4 675.0,631.5 677.0,623.4 707.5,635.6 701.4,649.8 679.0,686.4 670.9,677.2 674.0,667.0 647.5,653.9"/>
<polygon class="b" points="780.6,652.9 820.0,670.1 840.0,679.0 836.0,687.0 772.0,687.0"/>
<polygon class="b" points="837.3,507.0 849.5,510.0 850.5,507.5 859.7,511.0 858.6,515.0 869.8,520.2 839.7,583.3 809.6,569.6"/>
<polygon class="b" points="888.9,531.3 902.6,536.8 905.3,532.7 914.9,536.8 913.5,542.3 923.1,546.4 895.8,606.5 864.3,592.9"/>
<polygon class="b" points="930.0,577.0 961.2,587.9 939.9,634.6 911.5,621.4"/>
<polygon class="b" points="951.1,542.2 963.3,548.3 960.3,554.3 948.0,549.3"/>
<polygon class="b" points="948.0,523.2 963.3,529.3 960.0,536.0 945.0,531.0"/>
<polygon class="b" points="1019.0,664.0 1022.0,666.0 1022.0,687.0 1010.0,687.0"/>
<polyline class="v" points="198.0,153.6 364.6,228.8 427.4,259.6 540.0,313.0"/>
<polyline class="v" points="335.1,69.0 320.9,96.4"/>
<polyline class="v" points="346.3,69.0 329.0,100.5"/>
<polyline class="v" points="437.5,84.0 430.4,111.7"/>
<polyline class="v" points="446.0,88.0 420.0,148.0 404.0,141.0"/>
<polyline class="v" points="491.0,108.0 479.2,133.6"/>
<polyline class="v" points="502.0,113.0 475.0,172.0 462.0,167.0"/>
<polyline class="v" points="531.0,125.0 518.7,156.4 528.9,160.4 543.0,131.0"/>
<polyline class="v" points="590.0,213.0 531.0,190.0 526.0,197.0"/>
<polyline class="v" points="711.5,118.8 697.3,147.2"/>
<polyline class="v" points="742.0,131.0 725.8,163.5"/>
<polyline class="v" points="796.8,159.4 780.6,189.9"/>
<polyline class="v" points="805.0,163.5 792.8,187.8"/>
<polyline class="v" points="612.0,260.6 647.5,277.2 642.5,288.0 612.0,273.8"/>
<polyline class="v" points="722.4,210.7 710.6,240.8"/>
<polyline class="v" points="742.9,220.4 731.0,249.4"/>
<polyline class="v" points="226.5,300.8 239.7,307.3 222.4,350.0 214.0,346.0"/>
<polyline class="v" points="342.3,318.5 350.4,321.5 329.0,380.0"/>
<polyline class="v" points="318.0,372.0 336.0,330.0"/>
<polyline class="v" points="296.0,392.0 312.0,352.0"/>
<polyline class="v" points="304.0,396.0 320.0,358.0"/>
<polyline class="v" points="699.0,386.2 750.0,408.8 819.1,439.4 1022.0,529.0"/>
<polyline class="v" points="590.0,324.8 660.0,355.6 768.8,404.2 821.5,429.0 1022.0,520.6"/>
<polyline class="v" points="905.0,69.0 1022.0,120.0"/>
<polyline class="v" points="970.0,110.0 985.0,105.0 1022.0,125.0"/>
<polyline class="v" points="988.0,138.0 1022.0,146.0"/>
<polyline class="v" points="969.4,114.7 961.2,131.0 966.0,158.0"/>
<polyline class="v" points="988.0,138.0 981.0,178.0"/>
<polyline class="v" points="967.0,198.0 962.0,224.0"/>
<polyline class="v" points="976.0,200.0 972.0,224.0"/>
<polyline class="v" points="962.3,224.0 958.2,270.7"/>
<polyline class="v" points="972.4,224.0 974.4,274.8"/>
<polyline class="v" points="1019.1,343.8 994.8,364.2"/>
<polyline class="v" points="404.0,580.0 430.0,588.0"/>
<polyline class="v" points="404.0,592.0 424.0,601.0"/>
<polyline class="v" points="570.6,542.2 553.3,582.8"/>
<polyline class="v" points="577.7,545.2 560.4,586.8"/>
<polyline class="v" points="709.5,603.1 699.3,629.5"/>
<polyline class="v" points="721.7,608.2 712.5,629.5"/>
<polyline class="v" points="803.0,551.3 812.1,553.3 796.8,590.0 784.6,597.0"/>
<polyline class="v" points="863.7,570.6 871.8,573.6 842.4,613.3"/>
<polyline class="v" points="863.7,570.6 848.0,608.0 840.0,616.0"/>
<polyline class="v" points="889.1,605.1 872.9,639.7"/>
<polyline class="v" points="900.0,598.0 908.4,600.0 886.1,645.8"/>
<polyline class="v" points="920.6,627.5 905.4,653.9"/>
<polyline class="v" points="927.7,630.5 914.5,656.9"/>
<polyline class="v" points="1016.0,637.6 988.7,684.3"/>
<polyline class="v" points="1022.0,650.0 1003.0,687.0"/>
<path class="v" d="M437.6 326.5 Q436.0 319.0 435.6 315.5 Q435.2 312.0 436.2 307.5 Q437.2 303.0 439.4 299.2 Q441.5 295.5 443.8 292.9 Q446.0 290.3 448.8 289.6 Q451.5 289.0 465.2 295.2 Q479.0 301.4 499.3 310.8 Q519.6 320.2 525.3 322.9 L531.0 325.5"/>
<path class="v" d="M198.0 524.0 Q206.0 528.0 214.0 533.0 Q222.0 538.0 231.0 546.0 Q240.0 554.0 247.5 558.0 Q255.0 562.0 259.0 562.5 L263.0 563.0"/>
<path class="v" d="M263.0 563.0 Q266.0 556.0 257.0 551.0 Q248.0 546.0 241.0 547.5 Q234.0 549.0 237.0 551.0 L240.0 553.0"/>
<path class="v" d="M240.5 517.3 Q242.0 524.0 246.0 527.5 Q250.0 531.0 254.0 534.0 L258.0 537.0"/>
<path class="v" d="M319.8 595.3 Q328.0 601.0 334.0 604.0 Q340.0 607.0 346.0 609.5 L352.0 612.0"/>
<path class="v" d="M330.9 616.3 Q336.0 622.0 343.0 626.0 Q350.0 630.0 359.0 630.0 Q368.0 630.0 373.6 627.5 L379.2 625.0"/>
<path class="v" d="M379.2 625.0 Q386.0 632.0 392.0 636.0 L398.0 640.0"/>
<path class="v" d="M257.9 648.5 Q256.0 662.0 259.0 669.0 Q262.0 676.0 269.0 679.5 Q276.0 683.0 286.0 684.0 L296.0 685.0"/>
<path class="v" d="M480.0 612.0 Q506.0 610.0 508.0 611.0 Q510.0 612.0 512.0 626.0 Q514.0 640.0 501.0 643.5 Q488.0 647.0 481.0 652.5 Q474.0 658.0 472.0 669.0 L470.0 680.0"/>
<path class="v" d="M430.0 668.0 Q452.0 676.0 465.0 678.5 Q478.0 681.0 489.0 684.0 L500.0 687.0"/>
<path class="v" d="M440.0 648.0 Q454.0 653.0 462.0 650.5 Q470.0 648.0 476.0 641.0 Q482.0 634.0 484.0 628.0 L486.0 622.0"/>
<polyline class="q" points="387.0,68.0 404.0,76.0"/>
<polyline class="q" points="198.0,336.0 331.1,397.0 440.0,446.0"/>
<polyline class="q" points="213.0,328.0 330.0,380.0 470.0,444.0"/>
<polyline class="q" points="204.0,382.0 404.0,470.0 470.0,500.0"/>
<polyline class="q" points="198.0,370.0 230.0,384.0"/>
<polyline class="q" points="404.0,662.0 392.0,687.0"/>
<polyline class="q" points="582.7,224.0 566.5,257.5"/>
<polyline class="q" points="612.0,172.0 604.8,190.0 580.7,256.5 525.9,380.0 500.0,440.0"/>
<polyline class="q" points="648.0,183.0 641.0,192.0 635.0,206.0 612.0,259.5 560.0,376.0 548.0,404.0"/>
<polyline class="q" points="663.0,182.0 658.8,191.6 642.5,224.0 612.0,295.1 575.0,378.0"/>
<polyline class="q" points="672.9,118.8 696.3,68.0"/>
<polyline class="q" points="927.7,71.0 1022.0,111.7"/>
<polyline class="q" points="580.7,92.4 590.9,68.0"/>
<polyline class="q" points="846.5,224.0 1022.0,303.0"/>
<polyline class="q" points="877.0,224.0 1019.1,288.0"/>
<polyline class="q" points="540.0,528.0 612.0,560.4 760.0,627.0"/>
<polyline class="q" points="471.0,575.7 420.0,687.0"/>
<polyline class="q" points="440.6,678.3 460.0,687.0"/>
<polyline class="q" points="520.0,470.0 505.6,505.0 480.0,560.0"/>
<polyline class="q" points="836.0,655.0 900.0,687.0"/>
<path class="p" d="M650.6 68 L631.7 116 L529.4 69"/>
<path class="q" d="M660 68 L649.7 92.6 L641 109 Q631 126 606 116.8 L565.3 98.8 L528 82.2"/>
<polyline class="p" points="198.0,148.2 338.2,209.2 547.2,302.2"/>
<polyline class="p" points="277.3,68.0 235.6,163.5"/>
<polyline class="p" points="399.1,74.1 338.2,209.2"/>
<polyline class="p" points="452.7,98.5 391.0,236.0"/>
<polyline class="p" points="504.5,122.4 444.6,256.5"/>
<polyline class="p" points="404.0,77.0 452.7,98.5 504.5,122.4 604.0,165.5 607.1,170.0 566.5,257.5 547.2,302.2"/>
<polyline class="p" points="208.2,224.0 198.0,247.0"/>
<polyline class="p" points="228.5,178.7 208.2,224.0"/>
<polyline class="p" points="272.2,224.0 281.3,202.0"/>
<polyline class="p" points="272.2,224.0 229.5,321.5"/>
<polyline class="p" points="331.1,227.0 274.2,357.0"/>
<polyline class="p" points="388.0,252.4 331.1,380.0 326.0,392.0"/>
<polyline class="p" points="434.5,274.8 404.0,343.8 384.0,390.0"/>
<polyline class="p" points="488.3,300.2 452.8,380.0 442.0,404.0"/>
<polyline class="p" points="198.0,386.1 248.8,409.5 301.6,433.2 354.4,457.2 404.0,479.5 452.0,501.0"/>
<polyline class="p" points="248.8,409.5 198.0,518.1"/>
<polyline class="p" points="301.6,433.2 255.9,536.0 238.7,572.6"/>
<polyline class="p" points="354.4,457.2 317.9,536.0 289.8,596.6"/>
<polyline class="p" points="435.5,551.3 442.6,532.0 452.0,510.0"/>
<polyline class="p" points="403.6,623.4 442.6,532.0"/>
<polyline class="p" points="198.0,555.4 395.0,643.3 404.0,623.4"/>
<polyline class="p" points="198.0,568.2 390.0,654.9 376.0,687.0"/>
<polyline class="p" points="233.6,583.8 198.0,660.0"/>
<polyline class="p" points="285.4,607.2 248.8,686.4"/>
<polyline class="p" points="328.0,626.5 300.6,686.4"/>
<polyline class="p" points="684.1,138.1 734.9,159.4 820.0,198.0 866.8,219.3 998.8,279.0"/>
<polyline class="p" points="684.1,138.1 716.6,68.0"/>
<polyline class="p" points="734.9,159.4 774.5,68.0"/>
<polyline class="p" points="841.4,68.0 816.0,187.8 814.0,196.0"/>
<polyline class="p" points="899.3,71.0 866.8,219.3"/>
<polyline class="p" points="899.3,71.0 943.0,90.3 994.8,112.7 1022.0,124.0"/>
<polyline class="p" points="994.8,112.7 977.5,224.0 971.4,266.7"/>
<polyline class="p" points="683.8,200.0 738.0,224.0 801.0,251.4 773.5,380.0"/>
<polyline class="p" points="853.6,276.4 918.6,305.3 970.4,329.6 1022.0,353.0"/>
<polyline class="p" points="853.6,276.4 836.3,362.1 822.0,427.7"/>
<polyline class="p" points="918.6,305.3 885.1,380.0 856.6,443.0"/>
<polyline class="p" points="970.4,329.6 948.0,380.0 907.4,466.3"/>
<polyline class="p" points="1021.2,351.0 959.2,488.7"/>
<polyline class="p" points="822.0,427.7 856.6,443.0 907.4,466.3 959.2,488.7 1009.0,512.0 1022.0,518.0"/>
<polyline class="p" points="816.0,440.9 849.5,455.2 902.3,478.5 954.1,501.9 1022.0,531.3"/>
<polyline class="p" points="1022.0,497.8 1009.0,512.0"/>
<polyline class="p" points="849.5,455.2 816.0,530.3 787.6,588.0"/>
<polyline class="p" points="818.0,441.0 798.9,536.0 786.7,588.9 820.0,605.1"/>
<polyline class="p" points="902.3,478.5 875.9,536.0 840.4,614.3"/>
<polyline class="p" points="954.1,501.9 937.9,536.0 893.2,638.6"/>
<polyline class="p" points="1006.9,526.3 945.0,662.0"/>
<polyline class="p" points="1022.0,636.0 998.8,684.3"/>
<polyline class="p" points="692.5,384.6 699.0,387.5 749.1,410.0 766.2,416.4"/>
<polyline class="p" points="598.0,325.6 660.0,353.1 685.0,365.6 768.6,402.3"/>
<polyline class="p" points="768.4,402.3 774.5,380.0"/>
<polyline class="p" points="695.6,387.0 691.2,395.5 636.4,521.2"/>
<polyline class="p" points="749.1,410.5 693.3,536.0 688.2,545.2"/>
<polyline class="p" points="765.4,416.6 740.0,536.0 733.9,565.5"/>
<polyline class="p" points="612.0,510.0 636.4,521.2 666.8,536.0 733.9,565.5 741.0,532.0"/>
<polyline class="p" points="688.2,545.2 659.7,532.0"/>
<polyline class="p" points="786.7,588.9 816.0,603.1 998.8,686.4"/>
<polyline class="p" points="507.0,526.4 523.8,534.0 557.4,549.3 612.0,573.6 664.8,598.0 717.6,621.4 790.0,654.0"/>
<polyline class="p" points="557.4,549.3 496.4,686.4"/>
<polyline class="p" points="612.0,577.7 561.4,686.4"/>
<polyline class="p" points="664.8,598.0 624.2,686.4"/>
<polyline class="p" points="717.6,621.4 707.5,686.4"/>
<polyline class="p" points="774.5,647.8 766.4,686.4"/>
<polyline class="p" points="774.5,647.8 820.0,667.0 860.0,686.0"/>
<polyline class="p" points="505.6,532.0 446.7,666.0 493.4,686.4"/>
<polyline class="d" points="485.3,167.1 590.9,213.2"/>
<polyline class="d" points="464.9,212.2 566.5,257.5"/>
<polyline class="d" points="334.1,502.9 435.5,551.3"/>
<polyline class="d" points="312.8,549.9 404.0,591.9 415.0,597.0"/>
<polyline class="d" points="943.0,90.3 913.5,224.0 910.5,238.2"/>
<polyline class="bs" points="693.7,156.4 680.5,187.4"/>
<polyline class="bs" points="936.9,264.6 920.2,295.1"/>
<polyline class="bs" points="275.6,340.2 262.5,357.5 254.0,374.0 249.8,384.0 245.4,398.7"/>
<polyline class="br" points="496.4,444.6 513.7,401.9 545.6,414.9"/>
<polyline class="bs" points="496.4,444.6 481.0,476.0 463.0,512.0 457.8,526.7 489.7,540.1"/>
<polyline class="bm" points="554.7,470.4 544.2,494.8 531.0,525.8"/>
<polyline class="br" points="587.8,475.5 607.1,430.8 626.2,396.3 643.5,368.6"/>
<polyline class="bs" points="855.6,633.2 841.4,664.4"/>
<polyline class="br" points="198.0,159.4 318.9,216.3 404.0,254.5 545.6,321.9"/>
<polyline class="br" points="545.6,321.9 612.0,325.6 774.5,335.3 784.7,335.3"/>
<polyline class="br" points="782.2,343.4 655.7,364.2"/>
<polyline class="bs" points="784.7,335.3 820.0,343.8 842.4,354.0"/>
<polyline class="bs" points="782.2,343.4 820.0,347.9 842.4,354.0"/>
<polyline class="br" points="437.5,81.2 612.0,155.3 680.5,187.4 770.4,224.0 919.6,294.1"/>
<polyline class="br" points="936.9,264.6 1022.0,304.5"/>
<polyline class="br" points="198.0,302.2 275.6,340.2 364.6,380.0 404.0,399.3 496.4,444.6 554.7,470.4 587.8,475.5"/>
<polyline class="br" points="544.2,494.8 612.0,522.2 642.5,536.0 816.0,613.3 855.6,633.2"/>
<polyline class="gr" points="455.0,66.0 643.5,151.9 848.1,243.7 1022.0,321.8"/>
<polyline class="gr" points="607.0,218.3 544.2,369.2 535.0,390.2 493.4,489.7"/>
<polyline class="gr" points="493.4,489.7 471.0,536.0 419.8,655.5"/>
<polyline class="gr" points="198.0,358.0 244.8,380.0 404.0,449.1 493.4,489.7"/>
<polyline class="gr" points="493.4,489.7 612.0,542.2 741.0,600.0 816.0,631.5 946.0,689.0"/>
<polyline class="gr" points="1019.1,84.3 1030.0,60.0"/>
<path class="or" d="M842.4 354 Q853 356.6 861.3 363.4 L871.6 373.2 L896.5 395.6 L909.4 407.4 L946 443 L981.6 478.5 L1022 521"/>
<g fill="#000">
<polygon points="220.3,169.4 234.6,169.0 229.1,180.7"/><polygon points="265.6,191.4 279.9,191.0 274.4,202.7"/><polygon points="311.3,212.7 325.6,212.3 320.1,224.0"/><polygon points="357.0,234.1 371.3,233.7 365.8,245.4"/><polygon points="402.5,254.9 416.8,254.5 411.3,266.2"/><polygon points="448.8,276.9 463.1,276.5 457.6,288.2"/><polygon points="493.9,298.6 508.2,298.2 502.7,309.9"/>
<polygon points="569.3,323.0 582.4,317.3 581.7,330.2"/><polygon points="619.8,326.5 632.9,320.8 632.2,333.7"/><polygon points="669.6,329.5 682.7,323.8 682.0,336.7"/><polygon points="720.4,332.6 733.5,326.9 732.8,339.8"/>
<polygon points="720.5,353.0 732.0,344.5 734.2,357.3"/><polygon points="670.7,361.9 682.2,353.4 684.4,366.2"/>
<polygon points="444.0,82.9 458.3,82.1 453.1,94.0"/><polygon points="490.1,103.2 504.4,102.4 499.2,114.3"/><polygon points="536.1,123.5 550.4,122.7 545.2,134.6"/><polygon points="582.2,143.8 596.5,143.0 591.3,154.9"/><polygon points="685.6,189.5 699.9,188.7 694.7,200.6"/><polygon points="730.2,209.8 744.5,209.0 739.3,220.9"/><polygon points="775.9,230.8 790.2,230.0 785.0,241.9"/><polygon points="821.5,251.1 835.8,250.3 830.6,262.2"/><polygon points="868.2,271.4 882.5,270.6 877.3,282.5"/>
<polygon points="971.9,281.4 986.2,280.8 980.7,292.6"/>
<polygon points="453.3,67.6 467.6,66.9 462.2,78.7"/><polygon points="500.0,86.9 514.3,86.2 508.9,98.0"/><polygon points="545.7,108.3 560.0,107.6 554.6,119.4"/><polygon points="591.4,128.6 605.7,127.9 600.3,139.7"/><polygon points="656.2,158.0 670.5,157.3 665.1,169.1"/><polygon points="749.6,200.7 763.9,200.0 758.5,211.8"/><polygon points="795.4,219.0 809.7,218.3 804.3,230.1"/><polygon points="849.4,244.2 863.7,243.5 858.3,255.3"/><polygon points="989.6,306.9 1003.9,306.2 998.5,318.0"/>
<polygon points="223.9,315.9 238.2,315.5 232.6,327.2"/><polygon points="308.2,355.5 322.5,355.1 316.9,366.8"/><polygon points="355.0,375.8 369.3,375.4 363.7,387.1"/><polygon points="400.4,397.7 414.7,397.3 409.1,409.0"/><polygon points="445.2,420.1 459.5,419.7 453.9,431.4"/>
<polygon points="509.1,458.2 505.0,444.6 517.8,446.8"/>
<polygon points="586.4,477.2 585.9,465.1 595.9,469.8"/>
<polygon points="482.3,470.8 482.8,482.9 472.8,478.2"/>
<polygon points="573.0,506.6 587.3,505.8 582.1,517.7"/><polygon points="619.5,525.9 633.8,525.1 628.6,537.0"/><polygon points="665.2,547.9 679.5,547.1 674.3,559.0"/><polygon points="710.9,568.2 725.2,567.4 720.0,579.3"/><polygon points="756.6,589.5 770.9,588.7 765.7,600.6"/><polygon points="802.3,609.9 816.6,609.1 811.4,621.0"/>
<polygon points="210.7,363.8 224.9,363.1 219.6,374.9"/><polygon points="257.4,384.6 271.6,383.9 266.3,395.7"/><polygon points="303.2,405.0 317.4,404.3 312.1,416.1"/><polygon points="348.9,426.4 363.1,425.7 357.8,437.5"/><polygon points="393.6,446.7 407.8,446.0 402.5,457.8"/><polygon points="440.1,466.0 454.3,465.3 449.0,477.1"/>
<polygon points="504.0,494.4 518.3,493.6 513.1,505.5"/><polygon points="550.7,514.1 565.0,513.3 559.8,525.2"/><polygon points="596.3,536.6 610.6,535.8 605.4,547.7"/><polygon points="641.9,556.0 656.2,555.2 651.0,567.1"/><polygon points="689.6,577.3 703.9,576.5 698.7,588.4"/><polygon points="749.5,603.8 763.8,603.0 758.6,614.9"/><polygon points="795.2,624.1 809.5,623.3 804.3,635.2"/><polygon points="888.5,667.7 902.8,666.9 897.6,678.8"/><polygon points="933.3,687.6 947.6,686.8 942.4,698.7"/>
<polygon points="848.6,655.7 843.2,642.5 856.2,643.6"/>
<polygon points="584.6,270.3 583.5,256.1 595.5,261.1"/>
<polygon points="546.0,363.7 544.9,349.5 556.9,354.5"/>
<polygon points="564.1,319.2 563.0,305.0 575.0,310.0"/>
<polygon points="528.5,409.1 524.7,396.4 536.5,398.5"/>
<polygon points="482.5,512.5 483.5,526.8 471.5,521.7"/>
<polygon points="441.8,603.5 442.8,617.8 430.8,612.7"/>
<polygon points="615.4,417.5 615.6,404.3 626.2,409.9"/>
<polygon points="867.0,367.4 880.6,371.8 871.4,381.0"/>
<polygon points="903.3,401.7 917.0,405.6 908.2,415.1"/>
<polygon points="940.0,437.2 953.7,441.4 944.6,450.7"/>
<polygon points="975.7,472.6 989.3,477.0 980.1,486.2"/>
<polygon points="1011.3,508.1 1024.8,512.7 1015.5,521.8"/>
<polygon points="632.3,166.6 641.1,167.1 637.1,174.0"/>
<polygon points="398.2,68.3 408.1,67.9 404.3,76.1"/>
</g>
<polygon points="778.6,327.1 768.3,347.6 781,347.6" fill="#ffff00"/><path d="M778.6 327.1 L768.3 347.6" stroke="#222" stroke-width="1.1"/>
<rect x="686.2" y="148.9" width="15" height="15" fill="#ff0000" stroke="#000" stroke-width="1"/><rect x="691.0" y="153.7" width="5.4" height="5.4" rx="1.3" fill="#000"/>
<rect x="673.0" y="179.9" width="15" height="15" fill="#ff0000" stroke="#000" stroke-width="1"/><rect x="677.8" y="184.7" width="5.4" height="5.4" rx="1.3" fill="#000"/>
<rect x="929.4" y="257.1" width="15" height="15" fill="#ff0000" stroke="#000" stroke-width="1"/><rect x="934.2" y="261.9" width="5.4" height="5.4" rx="1.3" fill="#000"/>
<rect x="912.7" y="287.6" width="15" height="15" fill="#ff0000" stroke="#000" stroke-width="1"/><rect x="917.5" y="292.4" width="5.4" height="5.4" rx="1.3" fill="#000"/>
<rect x="237.9" y="391.2" width="15" height="15" fill="#ff0000" stroke="#000" stroke-width="1"/><rect x="242.7" y="396.0" width="5.4" height="5.4" rx="1.3" fill="#000"/>
<rect x="506.2" y="394.4" width="15" height="15" fill="#ff0000" stroke="#000" stroke-width="1"/><rect x="511.0" y="399.2" width="5.4" height="5.4" rx="1.3" fill="#000"/>
<rect x="538.1" y="407.4" width="15" height="15" fill="#ff0000" stroke="#000" stroke-width="1"/><rect x="542.9" y="412.2" width="5.4" height="5.4" rx="1.3" fill="#000"/>
<rect x="536.7" y="487.3" width="15" height="15" fill="#ff0000" stroke="#000" stroke-width="1"/><rect x="541.5" y="492.1" width="5.4" height="5.4" rx="1.3" fill="#000"/>
<rect x="523.5" y="518.3" width="15" height="15" fill="#ff0000" stroke="#000" stroke-width="1"/><rect x="528.3" y="523.1" width="5.4" height="5.4" rx="1.3" fill="#000"/>
<rect x="450.3" y="519.2" width="15" height="15" fill="#ff0000" stroke="#000" stroke-width="1"/><rect x="455.1" y="524.0" width="5.4" height="5.4" rx="1.3" fill="#000"/>
<rect x="482.2" y="532.6" width="15" height="15" fill="#ff0000" stroke="#000" stroke-width="1"/><rect x="487.0" y="537.4" width="5.4" height="5.4" rx="1.3" fill="#000"/>
<rect x="848.1" y="625.7" width="15" height="15" fill="#ff0000" stroke="#000" stroke-width="1"/><rect x="852.9" y="630.5" width="5.4" height="5.4" rx="1.3" fill="#000"/>
<rect x="833.9" y="656.9" width="15" height="15" fill="#ff0000" stroke="#000" stroke-width="1"/><rect x="838.7" y="661.7" width="5.4" height="5.4" rx="1.3" fill="#000"/>
<rect x="250.8" y="359" width="14" height="16" fill="#b00000" stroke="#000" stroke-width="1"/>
<circle cx="275.6" cy="340.2" r="7.6" fill="#00ff00" stroke="#000" stroke-width="1"/>
<circle cx="496.4" cy="444.6" r="7.6" fill="#00ff00" stroke="#000" stroke-width="1"/>
<circle cx="554.7" cy="470.4" r="7.6" fill="#00ff00" stroke="#000" stroke-width="1"/>
<circle cx="587.8" cy="475.5" r="7.6" fill="#00ff00" stroke="#000" stroke-width="1"/>
<circle cx="643.5" cy="368.6" r="7.6" fill="#00ff00" stroke="#000" stroke-width="1"/>
<circle cx="607.0" cy="428.7" r="7.6" fill="#00ff00" stroke="#000" stroke-width="1"/>
<ellipse cx="828.2" cy="356" rx="7.4" ry="5" fill="#ffff00"/>
<circle cx="654.7" cy="358.1" r="7.6" fill="#ffff00" stroke="#000" stroke-width="1"/>
<circle cx="653.6" cy="375.3" r="7.6" fill="#ffff00" stroke="#000" stroke-width="1"/>
<circle cx="614.0" cy="429.8" r="7.6" fill="#ffff00" stroke="#000" stroke-width="1"/>
<circle cx="784.7" cy="335.3" r="7.6" fill="#ffff00" stroke="#000" stroke-width="1"/>
<circle cx="782.2" cy="343.4" r="7.6" fill="#ffff00" stroke="#000" stroke-width="1"/>
<circle cx="828.6" cy="345.9" r="7.6" fill="#ffff00" stroke="#000" stroke-width="1"/>
<g fill="#000"><polygon points="773.4,336.0 778.9,333.8 778.4,339.1"/><polygon points="772.6,343.0 777.6,339.9 778.1,345.2"/></g>
<circle cx="545.6" cy="321.9" r="7.3" fill="#f6a985" stroke="#000" stroke-width="1"/>
<circle cx="545.6" cy="321.9" r="2.4" fill="#fff" stroke="#333" stroke-width="0.9"/>
<circle cx="842.4" cy="354.0" r="7.0" fill="#f6a985" stroke="#000" stroke-width="1"/>
<path d="M845 351 A3.4 3.4 0 1 0 845.6 356.6" fill="none" stroke="#c06a50" stroke-width="1.2"/>
<circle cx="643.5" cy="151.9" r="11" fill="#000"/><text x="643.5" y="158.2" text-anchor="middle" font-size="17.5" fill="#fff">S</text>
<circle cx="848.1" cy="243.7" r="11" fill="#000"/><text x="848.1" y="250.0" text-anchor="middle" font-size="17.5" fill="#fff">S</text>
<circle cx="493.4" cy="489.7" r="11" fill="#000"/><text x="493.4" y="496.0" text-anchor="middle" font-size="17.5" fill="#fff">S</text>
<circle cx="419.8" cy="655.5" r="11" fill="#000"/><text x="419.8" y="661.8" text-anchor="middle" font-size="17.5" fill="#fff">S</text>
<circle cx="741.0" cy="600.0" r="11" fill="#000"/><text x="741.0" y="606.3" text-anchor="middle" font-size="17.5" fill="#fff">S</text>
<circle cx="607.0" cy="218.3" r="11" fill="#0fa00f"/><text x="607.0" y="224.6" text-anchor="middle" font-size="17.5" fill="#fff">A</text>
<circle cx="1019.1" cy="84.3" r="11" fill="#0fa00f"/><text x="1019.1" y="90.6" text-anchor="middle" font-size="17.5" fill="#fff">A</text>
<text class="lg" x="189.0" y="104.2">2008</text>
<text class="lg" x="316.0" y="125.3">2010</text>
<text class="lg" x="375.1" y="149.6">2014</text>
<text class="lg" x="408.8" y="78.2">2015</text>
<text class="lg" x="427.1" y="173.6">2016</text>
<text class="lg" x="545.5" y="162.5">965</text>
<text class="lg" x="525.6" y="219.9">963</text>
<text class="lg" x="616.8" y="83.8">2019</text>
<text class="lg" x="708.2" y="106.2">2101</text>
<text class="lg" x="791.5" y="122.8">2103</text>
<text class="lg" x="883.8" y="151.3">2115</text>
<text class="lg" x="933.5" y="175.3">2117</text>
<text class="lg" x="1001.9" y="201.7">2119</text>
<text class="lg" x="943.7" y="77.1">2106</text>
<text class="lg" x="167.7" y="189.9">2007</text>
<text class="lg" x="192.2" y="245.3">2009</text>
<text class="lg" x="257.7" y="274.8">2011</text>
<text class="lg" x="311.5" y="298.1">2013</text>
<text class="lg" x="362.3" y="321.5">2015</text>
<text class="lg" x="504.3" y="265.6">961</text>
<text class="lg" x="412.9" y="344.3">2017</text>
<text class="lg" x="705.8" y="291.0">2102</text>
<text class="lg" x="845.2" y="351.6">2114</text>
<text class="lg" x="944.7" y="404.8">2118</text>
<text class="lg" x="1000.6" y="448.0">2120</text>
<text class="lg" x="465.7" y="391.2">2019</text>
<text class="lg" x="177.7" y="434.8">2012</text>
<text class="lg" x="224.8" y="486.6">2014</text>
<text class="lg" x="276.0" y="510.6">2016</text>
<text class="lg" x="394.7" y="499.8">909</text>
<text class="lg" x="618.8" y="437.3">2103</text>
<text class="lg" x="671.6" y="460.8">2105</text>
<text class="lg" x="825.9" y="530.7">2201</text>
<text class="lg" x="168.7" y="600.0">2013</text>
<text class="lg" x="218.1" y="660.0">2015</text>
<text class="lg" x="269.5" y="671.8">2023</text>
<text class="lg" x="344.6" y="683.3">2025</text>
<text class="lg" x="373.5" y="558.0">907</text>
<text class="lg" x="351.7" y="604.7">905</text>
<text class="lg" x="461.6" y="627.0">2100</text>
<text class="lg" x="535.7" y="619.8">2102</text>
<text class="lg" x="594.7" y="655.9">2104</text>
<text class="lg" x="675.7" y="645.3">2106</text>
<text class="lg" x="771.2" y="690.0">2200</text>
<text class="lg" x="877.7" y="554.3">2203</text>
<text class="lg" x="930.1" y="578.3">2205</text>
<text class="lg" x="993.0" y="612.8">2207</text>
<text class="lg" x="1009.2" y="692.0">2202</text>
<text class="ln" x="647.3" y="141.1">062</text>
<text class="ln" x="554.0" y="307.3">055</text>
<text class="ln" x="255.6" y="376.3">050</text>
<text class="ln" x="257.7" y="407.4">073</text>
<text class="ln" x="521.5" y="387.1">064</text>
<text class="ln" x="568.3" y="414.5">906</text>
<text class="ln" x="596.7" y="354.0">021</text>
<text class="ln" x="662.5" y="390.2">022</text>
<text class="ln" x="792.5" y="320.5">024</text>
<text class="lu" x="773.2" y="371.3">0</text>
<text class="ln" x="786.4" y="368.6">046</text>
<text class="ln" x="885.8" y="273.8">019</text>
<text class="ln" x="504.3" y="478.5">052</text>
<text class="ln" x="439.3" y="509.0">066</text>
<text class="ln" x="542.9" y="534.4">067</text>
<text class="ln" x="444.3" y="572.2">065</text>
<text class="ln" x="863.5" y="666.0">049</text>
<text class="ln" x="850.2" y="696.5">048</text>
<text class="lk" x="569.7" y="385.5" font-size="18" textLength="38.5" lengthAdjust="spacingAndGlyphs">146C</text>
<text class="lr" x="722.0" y="635.6" style="font-style:normal">078</text>
<text class="lu" x="828.9" y="381.5">0</text>
<text class="lu" x="558.1" y="354.0">30</text>
<text class="lb" text-anchor="middle" transform="translate(709.5 177.7) rotate(-65)" y="7.8">15</text>
<text class="lb" text-anchor="middle" transform="translate(211.7 335.8) rotate(24)" y="7.8">15</text>
<text class="lb" text-anchor="middle" transform="translate(834.3 280.9) rotate(22)" y="7.8">15</text>
<text class="lb" text-anchor="middle" transform="translate(951.1 283.9) rotate(-65)" y="7.8">15</text>
<text class="lb" text-anchor="middle" transform="translate(980.5 309.3) rotate(22)" y="7.8">15</text>
<text class="lb" text-anchor="middle" transform="translate(528.9 418.6) rotate(-65)" y="7.8">15</text>
<text class="lb" text-anchor="middle" transform="translate(523.8 336.7) rotate(24)" y="7.8">30</text>
<text class="lb" text-anchor="middle" transform="translate(475.1 459.2) rotate(25)" y="7.8">42</text>
<text class="lb" text-anchor="middle" transform="translate(571.6 496.8) rotate(15)" y="7.8">42</text>
<text class="lb" text-anchor="middle" transform="translate(616.0 471.4) rotate(-65)" y="7.8">42</text>
<text class="lb" text-anchor="middle" transform="translate(635.4 391.6) rotate(46)" y="7.8">12</text>
<text class="lb" text-anchor="middle" transform="translate(231.6 379.0) rotate(-65)" y="7.8">12</text>
<text class="lb" text-anchor="middle" transform="translate(680.0 579.7) rotate(20)" y="7.8">12</text>
<text class="lb" text-anchor="middle" transform="translate(829.2 643.7) rotate(-65)" y="7.8">12</text>
<text class="lb" text-anchor="middle" transform="translate(968.3 496.8) rotate(25)" y="7.8">0</text>
<text class="lr" text-anchor="middle" transform="translate(622.2 167.5) rotate(24)" y="7.8">10</text>
<text class="lr" text-anchor="middle" transform="translate(650.6 181.7) rotate(24)" y="7.8">10</text>
<text class="lr" text-anchor="middle" transform="translate(1002.9 336.7) rotate(22)" y="7.8">10</text>
<text class="lr" text-anchor="middle" transform="translate(504.5 519.1) rotate(10)" y="7.8">8</text>
<text class="lr" text-anchor="middle" transform="translate(624.2 232.1) rotate(-78)" y="7.8">8</text>
<text class="lr" text-anchor="middle" transform="translate(1001.9 73.1) rotate(-78)" y="7.8">8</text>
<text class="lr" text-anchor="middle" transform="translate(1000.8 97.5) rotate(56)" y="7.8">8</text>
<text class="lr" text-anchor="middle" transform="translate(203.0 385.0) rotate(16)" y="7.8">8</text>
<text class="lk" font-size="23" transform="translate(467.4 58.6) rotate(23)" textLength="104" lengthAdjust="spacingAndGlyphs">Windsor St</text>
<text class="lk" font-size="23" transform="translate(726.6 177.8) rotate(23)" textLength="104" lengthAdjust="spacingAndGlyphs">Windsor St</text>
</svg>
</div>
<!-- status -->
<div class="abs" style="left:274px;top:694px;width:23px;height:20px;border:1px solid #979797;border-radius:2px;background:transparent;"><div class="abs" style="left:1px;top:1px;width:18px;height:15px;border:1px solid #9a9a9a;border-radius:3px;background:#eceef4"></div></div>
<svg class="abs" style="left:274px;top:694px" width="24" height="22" viewBox="0 0 24 22"><g fill="none" stroke="#000"><ellipse cx="8.6" cy="7.4" rx="3.4" ry="4.6" transform="rotate(-28 8.6 7.4)" stroke-width="1.4" fill="#fff"/><path d="M7.4 4.6 L9.4 9.6" stroke-width="1.5"/><ellipse cx="13.4" cy="12.8" rx="4.6" ry="4.2" stroke-width="1.5" fill="#fff"/><circle cx="13.4" cy="13.4" r="1.3" fill="#000" stroke="none"/><path d="M6.8 10.8 L10 13.8" stroke-width="1.6"/><path d="M14 7.2 L18.4 4.6" stroke-width="0.9" stroke-dasharray="1 1.2"/><path d="M4 12.2 L5.4 11.6" stroke-width="0.9"/></g></svg>
<div class="abs" style="left:300px;top:694px;width:78px;height:20px;border:1px solid #979797;border-radius:2px;background:transparent;"><span class="abs" style="left:4px;top:3px;font-size:13.3px;line-height:16px;white-space:nowrap;color:#111;transform:scaleX(1.015);transform-origin:0 50%">Coordinate:</span></div>
<div class="abs" style="left:381px;top:694px;width:277px;height:20px;border:1px solid #979797;border-radius:2px;background:transparent;"><div class="abs" style="left:1px;top:1px;right:1px;bottom:1px;border:1px solid #858585;border-radius:2px;background:#fff"></div><span class="abs" style="left:0;width:276px;text-align:center;top:3px;font-size:13.3px;line-height:16px;color:#111;">2188746.5,260900.6</span></div>
<div class="abs" style="left:661px;top:694px;width:43px;height:20px;border:1px solid #979797;border-radius:2px;background:transparent;"><span class="abs" style="left:4px;top:3px;font-size:13.3px;line-height:16px;color:#111;transform:scaleX(0.925);transform-origin:0 50%">Scale</span></div>
<div class="abs" style="left:707px;top:694px;width:92px;height:20px;border:1px solid #979797;border-radius:2px;background:transparent;"><div class="abs" style="left:1px;top:1px;width:87px;height:15px;border:1px solid #858585;border-radius:2px;background:#fff"></div><div class="abs" style="left:73px;top:2px;width:16px;height:15px;background:linear-gradient(#f6f6f6,#d2d2d8);border-left:1px solid #b8b8b8;border-radius:0 2px 2px 0"></div><svg class="abs" style="left:76px;top:7px" width="10" height="6"><path d="M1 0.5 H9 L5 5.5 Z" fill="#000"/></svg><span class="abs" style="left:6px;top:3px;font-size:13.3px;line-height:16px;color:#111;transform:scaleX(0.98);transform-origin:0 50%">1:1689</span></div>
<div class="abs" style="left:802px;top:694px;width:23px;height:20px;border:1px solid #979797;border-radius:2px;background:transparent;"><div class="abs" style="left:1px;top:1px;width:18px;height:15px;border:1px solid #a4a4a4;border-radius:3px;background:#ececf0"></div><svg class="abs" style="left:0;top:0" width="22" height="19" viewBox="0 0 22 19"><path d="M3.2 16.6 C9 15.6 14 10.6 18.6 2 C18 9.6 13 16.4 4.6 18 Z" fill="#707070"/><circle cx="8.6" cy="6.4" r="3.7" fill="#fff" stroke="#e03030" stroke-width="1.3"/><path d="M6 3.9 L11.2 8.9" stroke="#e03030" stroke-width="1.3"/></svg></div>
<div class="abs" style="left:828px;top:692px;width:69px;height:24px;border:1px solid #979797;border-radius:2px;background:transparent;"><div class="abs" style="left:2px;top:5px;width:10px;height:10px;border:1px solid #8c8c8c;background:#fff;border-radius:1px"><svg class="abs" style="left:0;top:0" width="11" height="11" viewBox="0 0 11 11"><path d="M2.2 2.2 L8.8 8.8 M8.8 2.2 L2.2 8.8" stroke="#000" stroke-width="2.7" stroke-linecap="round"/></svg></div><span class="abs" style="left:19px;top:5px;font-size:13.3px;line-height:16px;color:#111;transform:scaleX(0.96);transform-origin:0 50%">Render</span></div>
<div class="abs" style="left:901px;top:694px;width:71px;height:20px;border:1px solid #979797;border-radius:2px;background:transparent;"><span class="abs" style="left:3px;top:3px;font-size:13.3px;line-height:16px;color:#9c9c9c;white-space:nowrap;transform:scaleX(0.95);transform-origin:0 50%">EPSG:2274</span></div>
<div class="abs" style="left:975px;top:694px;width:23px;height:20px;border:1px solid #979797;border-radius:2px;background:transparent;"><div class="abs" style="left:1px;top:1px;width:18px;height:15px;border:1px solid #a4a4a4;border-radius:3px;background:#ececf0"></div><svg class="abs" style="left:0;top:0" width="22" height="19" viewBox="0 0 22 19"><g fill="none" stroke="#7a7a7a" stroke-width="1.2"><circle cx="11" cy="9.5" r="6.6" fill="#c8c8c8"/><ellipse cx="11" cy="9.5" rx="3.2" ry="6.6"/><ellipse cx="11" cy="9.5" rx="6.6" ry="3"/></g></svg></div>
<div class="abs" style="left:1001px;top:694px;width:24px;height:20px;border:1px solid #979797;border-radius:2px;background:transparent;"><div class="abs" style="left:1px;top:1px;width:20px;height:15px;border:1px solid #a4a4a4;border-radius:3px;background:#ececf0"></div><svg class="abs" style="left:2px;top:1px" width="20" height="17" viewBox="0 0 20 17"><path d="M9.6 1.6 L17 15 H2.2 Z" fill="#f6f000" stroke="#222" stroke-width="1.1" stroke-linejoin="round"/><path d="M9.6 6 V10.8" stroke="#000" stroke-width="1.6"/><circle cx="9.6" cy="12.8" r="0.95" fill="#000"/></svg></div>
<div class="abs" style="left:0;top:720px;width:1024px;height:48px;background:#000"></div>
<svg class="abs" style="left:0;top:720px" width="1024" height="48" viewBox="0 720 1024 48">
<g fill="none" stroke="#9b9b9b" stroke-width="1.7">
<path d="M30.4 737.8 L24.4 743.6 L30.4 749.4 M24.8 743.6 H48.6 C57.6 743.6 57.6 753.2 48.6 753.2 H38.6"/>
<path d="M103 753.4 V742.4 L120 735.8 L137 742.4 V753.4 Z"/>
<path d="M192.6 743 V738.4 H217.4 V748.6"/><rect x="185" y="743.4" width="26.6" height="10"/>
</g>
<g fill="none" stroke="#5a5a5a" stroke-width="1.5"><path d="M767.4 741.4 V736.2 H772.6 M767.8 736.6 L773.8 742.6 M786.2 741.4 V736.2 H781 M785.8 736.6 L779.8 742.6 M767.4 748.6 V753.8 H772.6 M767.8 753.4 L773.8 747.4 M786.2 748.6 V753.8 H781 M785.8 753.4 L779.8 747.4"/></g>
<rect x="813.4" y="736.2" width="19.6" height="17.6" fill="none" stroke="#6a6a6a" stroke-width="1.5"/><path d="M815.6 751.6 V748 L819.6 744.4 L823 747.4 L826 745.6 L830.8 749 V751.6 Z" fill="#6a6a6a"/>
<g font-family="DejaVu Sans Light, DejaVu Sans, Liberation Sans, sans-serif" font-weight="200" font-size="27" fill="#33a9dd">
<text transform="translate(853.6,754) scale(1.68,1)">8</text>
<text transform="translate(889.5,754) scale(1.5,1)">1</text>
<text transform="translate(911,754) scale(1.68,1)">0</text>
</g>
<text x="879.6" y="750.9" font-family="Liberation Sans, sans-serif" font-size="25.5" fill="#33a9dd">:</text>
<path d="M953.9 754.2 L940.8 740.6 A19 19 0 0 1 967 740.6 Z" fill="#3399cc"/>
<g fill="none" stroke="#000" stroke-width="1.7"><path d="M943.2 745 A14 14 0 0 1 964.6 745"/><path d="M946.6 748.8 A9.4 9.4 0 0 1 961.2 748.8"/></g>
<rect x="973.2" y="733.8" width="13.6" height="20.4" rx="5.4" fill="#8a8a8a"/><path d="M976.6 740.2 L983.2 747.4 L980 750.6 V737.4 L983.2 740.6 L976.6 747.8" fill="none" stroke="#000" stroke-width="1.2"/>
<rect x="993.2" y="736.4" width="14" height="17.4" fill="#3a9ccb"/><rect x="997.4" y="733.2" width="5.6" height="3.4" fill="#5a5a5a"/>
</svg>
</div>
</body></html>
